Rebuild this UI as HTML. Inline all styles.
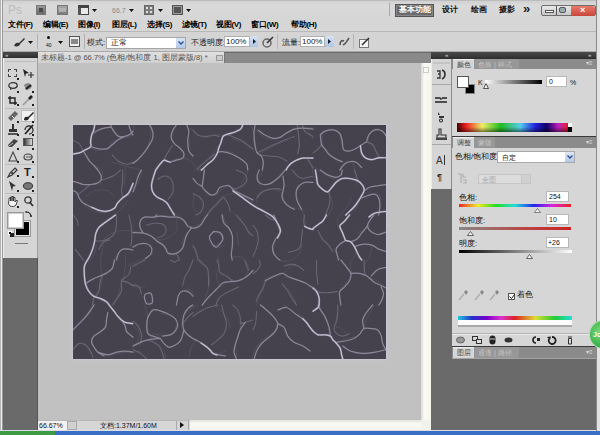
<!DOCTYPE html>
<html><head><meta charset="utf-8">
<style>
*{margin:0;padding:0;box-sizing:border-box}
html,body{width:600px;height:435px;overflow:hidden;background:#d3d3d3;font-family:"Liberation Sans",sans-serif;font-size:9px;color:#1a1a1a}
.a{position:absolute}
.t{position:absolute;white-space:nowrap;line-height:1}
.m{font-size:8px;top:21px;color:#000;letter-spacing:-0.3px;font-weight:bold}
.tb{position:absolute;width:9px;height:9px}
.dot{position:absolute;width:2px;height:2px;background:#222}
svg{position:absolute;overflow:visible}
</style></head><body>
<!-- ===== TITLE BAR ===== -->
<div class="a" style="left:0;top:0;width:600px;height:18px;background:linear-gradient(#cfcfcf,#dadada 30%,#d6d6d6)"></div>
<div class="a" style="left:0;top:0;width:600px;height:1px;background:#bdbdbd"></div>
<div class="t" style="left:8px;top:4px;font-size:12px;color:#bcbcbc;letter-spacing:0px">Ps</div>
<!-- Br -->
<div class="a" style="left:36px;top:5px;width:10px;height:10px;background:linear-gradient(#9a9a9a,#6a6a6a);border:1px solid #777"></div>
<div class="a" style="left:39px;top:8px;width:4px;height:4px;background:#4a4a4a"></div>
<!-- Mb -->
<div class="a" style="left:57px;top:5px;width:11px;height:10px;background:linear-gradient(#a8a8a8,#7a7a7a);border:1px solid #777"></div>
<div class="a" style="left:59px;top:8px;width:7px;height:4px;background:#c8c8c8;opacity:.6"></div>
<!-- view extras -->
<div class="a" style="left:78px;top:5px;width:11px;height:10px;background:#e8e8e8;border:1px solid #444;border-top-width:3px"></div>
<div class="a" style="left:78px;top:8px;width:3px;height:7px;background:#555"></div>
<svg style="left:92px;top:9px" width="5" height="3"><path d="M0 0H5L2.5 3Z" fill="#111"/></svg>
<div class="t" style="left:112px;top:7px;font-size:7px;color:#8a8a8a">66.7</div>
<svg style="left:129px;top:9px" width="5" height="3"><path d="M0 0H5L2.5 3Z" fill="#111"/></svg>
<!-- arrange -->
<div class="a" style="left:144px;top:5px;width:10px;height:10px;background:#7c7c7c;border:1px solid #666"></div>
<div class="a" style="left:146px;top:7px;width:2px;height:2px;background:#ddd"></div>
<div class="a" style="left:150px;top:7px;width:2px;height:2px;background:#ddd"></div>
<div class="a" style="left:146px;top:11px;width:2px;height:2px;background:#ddd"></div>
<div class="a" style="left:150px;top:11px;width:2px;height:2px;background:#ddd"></div>
<svg style="left:158px;top:9px" width="5" height="3"><path d="M0 0H5L2.5 3Z" fill="#111"/></svg>
<!-- screen mode -->
<div class="a" style="left:172px;top:5px;width:11px;height:10px;border:1px solid #555;background:#9a9a9a"></div>
<div class="a" style="left:174px;top:7px;width:7px;height:6px;background:#555"></div>
<svg style="left:186px;top:9px" width="5" height="3"><path d="M0 0H5L2.5 3Z" fill="#111"/></svg>
<!-- workspace -->
<div class="a" style="left:389px;top:3px;width:1px;height:13px;background:#aaa"></div>
<div class="a" style="left:395px;top:4px;width:39px;height:13px;background:#6b6b6b;border:1px solid #555;box-shadow:inset 0 0 0 1px #888"></div>
<div class="t" style="left:399px;top:6px;font-size:8px;color:#fff;font-weight:bold">基本功能</div>
<div class="t" style="left:442px;top:6px;font-size:8px;color:#111;font-weight:bold">设计</div>
<div class="t" style="left:471px;top:6px;font-size:8px;color:#111;font-weight:bold">绘画</div>
<div class="t" style="left:499px;top:6px;font-size:8px;color:#111;font-weight:bold">摄影</div>
<div class="t" style="left:523px;top:2px;font-size:13px;color:#222;font-weight:bold">»</div>
<!-- window buttons -->
<div class="a" style="left:541px;top:5px;width:55px;height:11px;border:1px solid #6e6e6e;border-radius:2px;background:linear-gradient(#e8e8e8,#c8c8c8)"></div>
<div class="a" style="left:556px;top:6px;width:1px;height:9px;background:#555"></div>
<div class="a" style="left:545px;top:10px;width:7px;height:2px;background:#fff;border:1px solid #555;box-sizing:content-box;height:1px"></div>
<div class="a" style="left:559px;top:7px;width:7px;height:6px;border:1px solid #556;border-radius:2px;background:#9aa"></div>
<div class="a" style="left:571px;top:6px;width:24px;height:10px;background:linear-gradient(#e87a6a,#c9453a);border-radius:0 2px 2px 0"></div>
<div class="t" style="left:580px;top:6px;font-size:9px;color:#fff;font-weight:bold">×</div>

<!-- ===== MENU BAR ===== -->
<div class="a" style="left:0;top:18px;width:600px;height:13px;background:#d6d6d6"></div>
<div class="t m" style="left:8px">文件(F)</div>
<div class="t m" style="left:43px">编辑(E)</div>
<div class="t m" style="left:78px">图像(I)</div>
<div class="t m" style="left:112px">图层(L)</div>
<div class="t m" style="left:147px">选择(S)</div>
<div class="t m" style="left:182px">滤镜(T)</div>
<div class="t m" style="left:216px">视图(V)</div>
<div class="t m" style="left:251px">窗口(W)</div>
<div class="t m" style="left:291px">帮助(H)</div>

<!-- ===== OPTIONS BAR ===== -->
<div class="a" style="left:2px;top:31px;width:595px;height:21px;background:#d4d4d4;border-top:1px solid #b8b8b8;border-left:1px solid #a8a8a8;border-bottom:1px solid #a9a9a9"></div>
<div class="a" style="left:37px;top:34px;width:1px;height:15px;background:#b0b0b0"></div>
<div class="a" style="left:84px;top:34px;width:1px;height:15px;background:#b0b0b0"></div>
<div class="a" style="left:277px;top:34px;width:1px;height:15px;background:#b8b8b8"></div>
<div class="a" style="left:353px;top:34px;width:1px;height:15px;background:#b8b8b8"></div>
<svg style="left:13px;top:37px" width="12" height="10"><path d="M1 9C2 6 4 5 6 6L11 1L12 2L7 7C7 9 4 10 1 9Z" fill="#333"/></svg>
<svg style="left:28px;top:41px" width="5" height="3"><path d="M0 0H5L2.5 3Z" fill="#111"/></svg>
<div class="a" style="left:47px;top:36px;width:3px;height:3px;border-radius:50%;background:#111"></div>
<div class="t" style="left:46px;top:43px;font-size:5px;color:#111">40</div>
<svg style="left:58px;top:41px" width="5" height="3"><path d="M0 0H5L2.5 3Z" fill="#111"/></svg>
<div class="a" style="left:69px;top:36px;width:11px;height:11px;border:1px solid #555;background:#eee"></div>
<div class="a" style="left:71px;top:39px;width:7px;height:5px;background:#888"></div>
<div class="t" style="left:87px;top:39px;font-size:8px">模式:</div>
<div class="a" style="left:106px;top:37px;width:80px;height:12px;background:#fff;border:1px solid #a5a5a5"></div>
<div class="t" style="left:111px;top:39px;font-size:8px">正常</div>
<div class="a" style="left:176px;top:38px;width:9px;height:10px;background:linear-gradient(#d8e4f4,#b4c8e6)"></div>
<svg style="left:178px;top:41px" width="6" height="4"><path d="M0.5 0.5L3 3L5.5 0.5" stroke="#2a4f9a" stroke-width="1.3" fill="none"/></svg>
<div class="t" style="left:191px;top:39px;font-size:8px">不透明度:</div>
<div class="a" style="left:224px;top:36px;width:26px;height:11px;background:#fff;border:1px solid #b0b0b0"></div>
<div class="t" style="left:226px;top:38px;font-size:8px">100%</div>
<div class="a" style="left:250px;top:36px;width:8px;height:11px;background:linear-gradient(#d6e2f4,#b0c4e4)"></div>
<svg style="left:253px;top:39px" width="3" height="5"><path d="M0 0L3 2.5L0 5Z" fill="#123"/></svg>
<svg style="left:262px;top:36px" width="12" height="12"><circle cx="5" cy="7" r="4" fill="none" stroke="#666" stroke-width="1.5"/><path d="M5 7L11 1" stroke="#333" stroke-width="1.6"/></svg>
<div class="t" style="left:282px;top:39px;font-size:8px">流量:</div>
<div class="a" style="left:300px;top:36px;width:25px;height:11px;background:#fff;border:1px solid #b0b0b0"></div>
<div class="t" style="left:302px;top:38px;font-size:8px">100%</div>
<div class="a" style="left:325px;top:36px;width:9px;height:11px;background:linear-gradient(#d6e2f4,#b0c4e4)"></div>
<svg style="left:328px;top:39px" width="3" height="5"><path d="M0 0L3 2.5L0 5Z" fill="#123"/></svg>
<svg style="left:339px;top:37px" width="11" height="10"><path d="M1 8C1 4 3 3 5 4M4 8C6 7 7 6 8 4L10 1" stroke="#555" stroke-width="1.6" fill="none"/></svg>
<svg style="left:359px;top:37px" width="12" height="12"><rect x="0.5" y="2.5" width="9" height="8" fill="#f4f4f4" stroke="#777"/><path d="M3 8L10 1" stroke="#333" stroke-width="1.6"/></svg>

<!-- ===== TOOLBOX ===== -->
<div class="a" style="left:0;top:0;width:3px;height:431px;background:#f0f0f0;border-left:1px solid #b4b4b4;border-right:1px solid #9a9a9a"></div>
<div class="a" style="left:3px;top:52px;width:35px;height:206px;background:#d5d5d5;border-left:1px solid #eee;border-right:1px solid #a0a0a0"></div>
<div class="a" style="left:3px;top:52px;width:35px;height:6px;background:linear-gradient(#4a4a4a,#2e2e2e)"></div>
<div class="t" style="left:5px;top:52px;font-size:6px;color:#ddd">»</div>
<div class="a" style="left:5px;top:61px;width:31px;height:1px;background:#bcbcbc"></div>
<!-- row1 marquee / move -->
<div class="a" style="left:8px;top:69px;width:9px;height:8px;border:1px dashed #444"></div>
<svg style="left:23px;top:69px" width="11" height="9"><path d="M0 0L6 4L3 4.5L2 8Z" fill="#222"/><path d="M8 3V9M5 6H11" stroke="#333" stroke-width="1.2"/></svg>
<!-- row2 lasso / quick select -->
<svg style="left:8px;top:82px" width="10" height="8"><ellipse cx="5" cy="3.5" rx="4.2" ry="2.8" fill="none" stroke="#333" stroke-width="1.3"/><path d="M2 5L3 8" stroke="#333"/></svg>
<svg style="left:23px;top:82px" width="10" height="9"><path d="M1 3C3 1 6 1 6 1L9 4C8 7 5 8 3 8Z" fill="#888"/><path d="M3 7L8 3" stroke="#222" stroke-width="2"/></svg>
<!-- row3 crop / eyedropper -->
<svg style="left:8px;top:96px" width="9" height="9"><path d="M2 0V7H9M0 2H7V9" stroke="#222" stroke-width="1.4" fill="none"/></svg>
<svg style="left:23px;top:95px" width="10" height="10"><path d="M0 10L6 4" stroke="#999" stroke-width="1.6"/><path d="M5 3L8 0L10 2L7 5Z" fill="#222"/></svg>
<div class="dot" style="left:17px;top:78px"></div>
<div class="dot" style="left:17px;top:91px"></div><div class="dot" style="left:32px;top:91px"></div>
<div class="dot" style="left:17px;top:104px"></div><div class="dot" style="left:32px;top:104px"></div>
<div class="a" style="left:5px;top:108px;width:31px;height:1px;background:#bcbcbc"></div>
<!-- row4 healing / brush(selected) -->
<svg style="left:8px;top:111px" width="11" height="10"><path d="M2 9L0 7L7 0L10 3L3 10Z" fill="#666"/><path d="M4 5L6 7" stroke="#ddd"/></svg>
<div class="a" style="left:21px;top:110px;width:14px;height:12px;background:#f0f0f0;border:1px solid #bbb"></div>
<svg style="left:23px;top:112px" width="11" height="9"><path d="M1 8C1 5 3 4 5 5L10 0L11 1L6 6C6 8 3 9 1 8Z" fill="#222"/></svg>
<!-- row5 stamp / history brush -->
<svg style="left:8px;top:124px" width="10" height="11"><path d="M4 0H6V5H9V8H1V5H4Z" fill="#333"/><rect x="0" y="9" width="10" height="2" fill="#555"/></svg>
<svg style="left:23px;top:124px" width="11" height="11"><path d="M2 6A4 4 0 1 1 6 10" stroke="#333" stroke-width="1.3" fill="none"/><path d="M2 10L10 1" stroke="#222" stroke-width="1.8"/></svg>
<!-- row6 eraser / gradient -->
<svg style="left:8px;top:138px" width="11" height="9"><path d="M0 7L6 1L10 3L4 9H1Z" fill="#444"/><path d="M1 8L5 5" stroke="#bbb"/></svg>
<div class="a" style="left:23px;top:138px;width:10px;height:8px;background:linear-gradient(90deg,#333,#ddd);border:1px solid #555"></div>
<!-- row7 blur / dodge -->
<svg style="left:9px;top:152px" width="8" height="10"><path d="M4 0L8 9H0Z" fill="none" stroke="#444" stroke-width="1.1"/></svg>
<svg style="left:23px;top:152px" width="11" height="10"><ellipse cx="5" cy="5" rx="4" ry="3" fill="none" stroke="#444" stroke-width="1.2"/><path d="M3 5H10" stroke="#555"/></svg>
<div class="dot" style="left:17px;top:121px"></div><div class="dot" style="left:32px;top:121px"></div>
<div class="dot" style="left:17px;top:134px"></div><div class="dot" style="left:32px;top:134px"></div>
<div class="dot" style="left:17px;top:148px"></div><div class="dot" style="left:32px;top:148px"></div>
<div class="dot" style="left:17px;top:161px"></div><div class="dot" style="left:32px;top:161px"></div>
<div class="a" style="left:5px;top:164px;width:31px;height:1px;background:#bcbcbc"></div>
<!-- row8 pen / type -->
<svg style="left:8px;top:167px" width="10" height="10"><path d="M0 10L2 6L7 1L9 3L4 8Z" fill="none" stroke="#333" stroke-width="1.2"/><circle cx="4" cy="6" r="1" fill="#333"/></svg>
<div class="t" style="left:24px;top:167px;font-size:11px;font-weight:bold;color:#222">T</div>
<!-- row9 path select / ellipse -->
<svg style="left:9px;top:181px" width="8" height="10"><path d="M0 0L7 5L4 5.5L3 10Z" fill="#333"/></svg>
<svg style="left:23px;top:182px" width="10" height="8"><ellipse cx="5" cy="4" rx="4.5" ry="3.3" fill="#777" stroke="#333"/></svg>
<div class="dot" style="left:17px;top:175px"></div><div class="dot" style="left:32px;top:176px"></div>
<div class="dot" style="left:17px;top:190px"></div><div class="dot" style="left:32px;top:190px"></div>
<div class="a" style="left:5px;top:193px;width:31px;height:1px;background:#bcbcbc"></div>
<!-- row10 hand / zoom -->
<svg style="left:8px;top:196px" width="10" height="11"><path d="M2 10C0 8 0 6 1 5V2H2.5V5V1H4V5V0.5H5.5V5V1.5H7V6L8 4.5H9.5L8 9C7 10.5 4 11 2 10Z" fill="#f4f4f4" stroke="#333" stroke-width="0.9"/></svg>
<svg style="left:24px;top:196px" width="10" height="11"><circle cx="4" cy="4" r="3.2" fill="none" stroke="#333" stroke-width="1.3"/><path d="M6 6.5L9 10" stroke="#333" stroke-width="1.8"/></svg>
<div class="dot" style="left:17px;top:206px"></div>
<!-- colors -->
<div class="a" style="left:15px;top:221px;width:15px;height:15px;background:#000;border:1px solid #e6e6e6;box-shadow:0 0 0 1px #999"></div>
<div class="a" style="left:8px;top:213px;width:15px;height:15px;background:#fff;border:1px solid #ccc;box-shadow:0 0 0 1px #999"></div>
<svg style="left:26px;top:211px" width="6" height="6"><path d="M0 1C3 1 5 2 5 6" stroke="#222" fill="none" stroke-width="1.2"/><path d="M0 0V2M4 5H6" stroke="#222"/></svg>
<div class="a" style="left:8px;top:231px;width:4px;height:4px;background:#000;border:1px solid #fff"></div>
<div class="a" style="left:10px;top:233px;width:4px;height:4px;background:#222"></div>
<div class="a" style="left:15px;top:243px;width:13px;height:1px;background:#777"></div>
<div class="a" style="left:3px;top:258px;width:35px;height:172px;background:#6a6a6a;border-right:1px solid #555"></div>

<!-- ===== DOC TAB BAR ===== -->
<div class="a" style="left:38px;top:52px;width:393px;height:11px;background:#8a8a8a;border-top:1px solid #6a6a6a"></div>
<div class="a" style="left:38px;top:52px;width:187px;height:11px;background:linear-gradient(#e0e0e0,#d0d0d0);border-right:1px solid #777"></div>
<div class="t" style="left:41px;top:54px;font-size:7.5px;color:#555">未标题-1 @ 66.7% (色相/饱和度 1, 图层蒙版/8) *</div>
<div class="a" style="left:216px;top:55px;width:7px;height:6px;border:1px solid #999;background:#ccc"></div>

<!-- ===== CANVAS AREA ===== -->
<div class="a" style="left:38px;top:63px;width:383px;height:357px;background:#c1c1c1"></div>
<div class="a" id="cv" style="left:73px;top:125px;width:313px;height:234px;background:#45414d;overflow:hidden;box-shadow:0 0 0 1px #c8c7cf,0 0 2px 3px #c4c4c8"><svg width="313" height="234" viewBox="0 0 313 234" style="position:absolute;left:0;top:0"><path fill="none" stroke="#55505e" stroke-width="1" stroke-linecap="round" d="M21.4 0.0C20.9 1.4 19.2 5.3 18.6 8.3C18.0 11.3 18.4 15.6 18.0 18.0C17.6 20.4 18.1 21.3 16.5 22.8C14.9 24.3 11.1 26.1 8.3 27.0C5.6 27.9 1.4 28.1 0.0 28.3M20.7 9.7C21.9 8.9 24.9 6.1 27.6 4.8C30.3 3.5 34.9 2.1 37.0 2.0C39.1 1.9 38.6 2.6 40.0 4.0C41.4 5.4 43.5 8.9 45.5 10.3C47.5 11.7 49.9 12.4 52.0 12.4C54.1 12.4 56.5 11.7 58.0 10.3C59.5 8.9 60.2 5.7 60.7 4.0C61.2 2.3 60.7 0.7 60.7 0.0M16.5 22.8C17.8 23.2 21.2 25.4 24.0 25.5C26.8 25.6 30.3 24.9 33.0 23.4C35.7 21.9 37.5 18.1 40.0 16.5C42.5 14.9 45.0 14.8 48.0 13.8C51.0 12.8 56.3 10.9 58.0 10.3M10.3 26.2C11.1 27.6 13.5 32.2 15.2 34.5C16.9 36.8 18.6 38.4 20.7 40.0C22.8 41.6 26.1 42.6 27.6 44.0C29.1 45.4 29.6 46.5 29.7 48.3C29.8 50.1 28.6 53.0 28.3 55.0C28.0 57.0 27.7 59.2 27.6 60.0M78.6 0.0C78.3 2.3 77.9 9.7 77.0 13.8C76.1 17.9 74.6 21.8 73.0 24.8C71.4 27.8 69.6 29.6 67.6 31.7C65.5 33.8 62.8 36.1 60.7 37.2C58.6 38.4 56.0 38.4 55.0 38.6M52.4 41.4C54.5 41.8 62.0 43.0 64.8 44.0C67.6 45.0 68.8 45.8 69.0 47.6C69.2 49.4 66.9 52.9 66.2 55.0C65.5 57.1 65.0 59.2 64.8 60.0M38.6 37.2C40.2 37.7 46.0 38.9 48.3 40.0C50.6 41.1 51.9 40.7 52.4 44.0C52.9 47.3 51.2 57.3 51.0 60.0M113.0 0.0C113.2 0.5 113.3 1.9 114.5 2.8C115.7 3.7 117.9 4.1 120.0 5.5C122.1 6.9 124.5 9.8 127.0 11.0C129.5 12.2 132.7 12.6 135.0 12.4C137.3 12.2 138.9 10.1 140.7 9.7C142.5 9.2 144.2 9.5 146.0 9.7C147.8 9.9 149.4 11.5 151.7 11.0C154.0 10.5 158.6 7.6 160.0 6.9M100.7 4.0C100.5 5.6 98.8 11.0 99.3 13.8C99.8 16.6 101.8 18.9 103.4 20.7C105.0 22.5 107.6 23.0 109.0 24.8C110.4 26.6 110.3 29.9 111.7 31.7C113.1 33.5 115.4 34.3 117.2 35.9C119.0 37.5 121.2 39.5 122.8 41.4C124.4 43.2 126.3 46.1 127.0 47.0M117.2 16.5C117.0 17.9 115.4 22.3 115.9 24.8C116.4 27.3 119.3 30.6 120.0 31.7M160.0 27.6C158.6 27.4 154.2 26.2 151.7 26.2C149.2 26.2 146.4 26.5 144.8 27.6C143.2 28.7 143.6 31.2 142.0 33.0C140.4 34.8 136.8 36.8 135.0 38.6C133.2 40.4 131.7 41.7 131.0 44.0C130.3 46.3 131.2 49.7 131.0 52.4C130.8 55.1 129.9 58.7 129.7 60.0M146.0 19.3C145.1 20.7 143.0 24.8 140.7 27.6C138.4 30.4 135.2 33.4 132.4 35.9C129.6 38.4 126.1 40.9 124.0 42.8C121.9 44.6 120.7 46.3 120.0 47.0M80.0 49.7C80.7 48.3 82.4 43.7 84.0 41.4C85.6 39.1 88.1 37.0 89.7 35.9C91.3 34.8 92.9 34.3 93.8 34.5C94.7 34.7 95.0 36.8 95.2 37.2M95.2 37.2C97.3 36.5 104.4 33.5 107.6 33.0C110.8 32.5 113.3 34.2 114.5 34.5M160.0 6.9C161.2 6.7 165.1 6.7 166.9 5.5C168.7 4.3 170.3 0.9 171.0 0.0M178.0 0.0C178.4 1.4 180.2 5.3 180.7 8.3C181.1 11.3 180.2 15.0 180.7 18.0C181.1 21.0 182.2 24.1 183.4 26.2C184.6 28.2 186.4 28.2 187.6 30.3C188.8 32.4 190.1 35.8 190.3 38.6C190.5 41.4 189.9 44.3 189.0 47.0C188.1 49.7 185.0 52.8 184.8 55.0C184.6 57.2 187.1 59.2 187.6 60.0M183.4 5.5C184.8 6.7 188.7 10.9 191.7 12.4C194.7 13.9 198.4 14.7 201.4 14.5C204.4 14.3 207.2 12.5 209.7 11.0C212.2 9.5 214.3 6.9 216.6 5.5C218.9 4.1 219.5 3.2 223.4 2.8C227.3 2.3 237.2 2.8 240.0 2.8M160.0 13.8C161.8 14.5 168.0 16.4 171.0 18.0C174.0 19.6 175.9 22.0 178.0 23.4C180.1 24.8 182.5 25.7 183.4 26.2M186.2 29.0C187.8 28.1 192.4 25.2 195.9 23.4C199.4 21.6 203.8 19.4 207.0 18.0C210.2 16.6 213.7 15.7 215.0 15.2M240.0 33.0C238.2 33.0 232.2 32.5 229.0 33.0C225.8 33.5 223.0 34.5 220.7 35.9C218.4 37.3 217.0 39.5 215.2 41.4C213.4 43.2 211.6 45.2 209.7 47.0C207.8 48.8 206.1 50.2 204.0 52.4C201.9 54.6 198.3 58.7 197.2 60.0M160.0 29.0C161.4 29.9 166.0 32.7 168.3 34.5C170.6 36.3 172.9 37.5 173.8 40.0C174.7 42.5 174.7 46.7 173.8 49.7C172.9 52.7 169.2 56.6 168.3 58.0M223.4 0.0C223.8 2.3 225.8 9.2 226.0 13.8C226.2 18.4 225.0 25.3 224.8 27.6M231.7 2.8C232.6 3.7 235.6 6.5 237.0 8.3C238.4 10.1 239.5 12.9 240.0 13.8M234.5 34.5C235.2 35.6 237.7 39.1 238.6 41.4C239.5 43.7 239.8 47.1 240.0 48.3M249.7 6.9C251.1 6.4 255.2 3.8 258.0 4.0C260.8 4.2 264.4 5.5 266.2 8.3C268.0 11.1 267.9 17.7 269.0 20.7C270.1 23.7 270.9 25.5 273.0 26.2C275.1 26.9 279.1 25.7 281.4 24.8C283.7 23.9 286.1 21.4 287.0 20.7M249.7 8.3C249.7 10.1 249.0 16.6 249.7 19.3C250.4 22.1 252.4 23.0 253.8 24.8C255.2 26.6 255.7 28.2 258.0 30.3C260.3 32.4 265.1 36.1 267.6 37.2C270.1 38.4 270.7 37.2 273.0 37.2C275.3 37.2 279.1 36.7 281.4 37.2C283.7 37.7 286.1 39.5 287.0 40.0M240.0 27.6C240.9 26.9 243.9 24.8 245.5 23.4C247.1 22.0 249.0 20.0 249.7 19.3M287.0 20.7C287.2 22.3 287.0 28.0 288.3 30.3C289.6 32.6 292.7 33.8 295.0 34.5C297.3 35.2 300.4 34.8 302.0 34.5C303.6 34.2 303.0 33.2 304.8 33.0C306.6 32.8 311.6 33.0 313.0 33.0M295.0 16.5C295.3 15.1 295.4 10.4 296.6 8.3C297.8 6.2 299.9 4.5 302.0 4.0C304.1 3.5 307.2 4.3 309.0 5.5C310.8 6.7 312.3 10.1 313.0 11.0M300.7 19.3C301.1 20.7 302.5 25.8 303.4 27.6C304.3 29.4 305.7 29.9 306.2 30.3M267.6 41.4C267.8 42.8 269.5 47.9 269.0 49.7C268.5 51.5 266.2 51.7 264.8 52.4C263.4 53.1 261.4 53.6 260.7 53.8M280.0 38.6C280.5 40.2 282.1 44.7 282.8 48.3C283.5 51.9 283.8 58.0 284.0 60.0M240.0 41.4C241.4 42.3 245.6 45.2 248.3 47.0C251.1 48.8 254.0 51.3 256.5 52.4C259.0 53.5 262.2 53.6 263.4 53.8M240.0 48.3C240.5 49.4 242.1 53.0 242.8 55.0C243.5 57.0 243.8 59.2 244.0 60.0M63.4 60.0C62.7 61.4 61.1 66.2 59.3 68.3C57.5 70.4 54.7 71.0 52.4 72.4C50.1 73.8 47.1 74.9 45.5 76.5C43.9 78.1 44.2 80.4 42.8 82.0C41.4 83.6 39.7 85.3 37.2 86.2C34.7 87.1 30.8 87.8 27.6 87.6C24.4 87.4 20.8 86.2 18.0 84.8C15.2 83.4 13.1 81.4 11.0 79.3C8.9 77.2 6.9 74.2 5.5 72.4C4.1 70.6 3.2 69.0 2.8 68.3M55.2 75.2C54.1 76.6 50.6 80.9 48.3 83.4C46.0 85.9 44.4 88.0 41.4 90.3C38.4 92.6 33.1 94.9 30.3 97.2C27.5 99.5 26.2 101.5 24.8 104.0C23.4 106.5 22.7 109.7 22.0 112.4C21.3 115.1 20.9 118.7 20.7 120.0M13.8 71.0C15.2 70.1 18.6 66.4 22.0 65.5C25.4 64.6 31.3 64.6 34.5 65.5C37.7 66.4 40.2 70.1 41.4 71.0M80.0 93.0C78.4 93.0 72.6 92.1 70.3 93.0C68.0 93.9 66.7 96.5 66.2 98.6C65.8 100.7 66.2 103.7 67.6 105.5C69.0 107.3 72.4 108.5 74.5 109.7C76.6 110.9 79.1 112.0 80.0 112.4M66.2 107.0C63.9 106.8 56.5 105.5 52.4 105.5C48.3 105.5 44.6 105.8 41.4 107.0C38.2 108.2 35.3 110.2 33.0 112.4C30.7 114.6 28.5 118.7 27.6 120.0M80.0 68.3C81.4 69.2 86.0 72.2 88.3 73.8C90.6 75.4 92.0 75.9 93.8 78.0C95.6 80.1 97.0 83.9 99.3 86.2C101.6 88.5 105.1 89.6 107.6 91.7C110.1 93.8 112.7 96.8 114.5 98.6C116.3 100.4 117.9 102.1 118.6 102.8M118.6 102.8C120.0 102.1 124.7 100.4 127.0 98.6C129.3 96.8 130.6 94.2 132.4 91.7C134.2 89.2 135.9 85.9 138.0 83.4C140.1 80.9 142.5 78.6 144.8 76.5C147.1 74.4 149.2 72.4 151.7 71.0C154.2 69.6 158.6 68.8 160.0 68.3M118.6 102.8C117.7 104.0 114.4 107.7 113.0 109.7C111.6 111.7 111.0 113.3 110.3 115.0C109.6 116.7 109.2 119.2 109.0 120.0M129.7 60.0C129.7 60.7 128.8 62.6 129.7 64.0C130.6 65.4 133.1 67.3 135.2 68.3C137.2 69.2 139.9 70.2 142.0 69.7C144.1 69.2 145.5 66.9 147.6 65.5C149.7 64.1 152.4 61.9 154.5 61.4C156.6 60.9 159.1 62.6 160.0 62.8M80.0 93.0C81.4 92.5 85.3 90.5 88.3 90.3C91.3 90.1 95.5 91.0 98.0 91.7C100.5 92.4 102.5 92.2 103.4 94.5C104.3 96.8 104.3 102.8 103.4 105.5C102.5 108.2 100.5 109.4 98.0 111.0C95.5 112.6 91.3 114.8 88.3 115.0C85.3 115.2 81.4 112.8 80.0 112.4M121.4 68.3C121.2 70.4 119.6 77.5 120.0 80.7C120.4 83.9 123.3 86.4 124.0 87.6M139.3 108.3C140.0 108.1 141.8 106.5 143.4 106.9C145.0 107.4 148.3 109.2 149.0 111.0C149.7 112.8 148.8 116.5 147.6 118.0C146.4 119.5 142.9 119.7 142.0 120.0M149.0 87.6C149.9 89.9 152.7 97.3 154.5 101.4C156.3 105.5 159.1 110.6 160.0 112.4M160.0 62.8C161.2 63.7 164.2 66.2 166.9 68.3C169.7 70.4 173.5 72.9 176.5 75.2C179.5 77.5 181.8 79.9 184.8 82.0C187.8 84.1 191.7 85.8 194.5 87.6C197.3 89.4 199.8 90.9 201.4 93.0C203.0 95.1 203.1 97.7 204.0 100.0C204.9 102.3 207.2 104.7 207.0 107.0C206.8 109.3 203.7 111.6 202.8 113.8C201.9 116.0 201.6 119.0 201.4 120.0M183.4 78.0C183.6 76.6 183.7 71.8 184.8 69.7C186.0 67.6 187.5 66.5 190.3 65.5C193.1 64.5 198.4 63.5 201.4 64.0C204.4 64.5 207.2 67.6 208.3 68.3M212.4 60.0C211.9 61.6 209.7 67.0 209.7 69.7C209.7 72.5 211.0 74.5 212.4 76.5C213.8 78.5 215.9 80.8 218.0 82.0C220.1 83.2 222.5 82.7 224.8 83.4C227.1 84.1 230.5 85.7 231.7 86.2M224.8 60.0C224.6 61.8 222.9 67.5 223.4 71.0C223.9 74.5 226.2 76.8 227.6 80.7C229.0 84.6 230.8 91.0 231.7 94.5C232.6 98.0 231.6 99.8 233.0 101.4C234.4 103.0 238.8 103.6 240.0 104.0M160.0 87.6C161.2 88.8 164.8 92.2 166.9 94.5C169.0 96.8 170.6 98.9 172.4 101.4C174.2 103.9 177.1 108.3 178.0 109.7M164.0 107.0L165.5 120.0M244.0 60.0C244.9 60.7 248.1 63.0 249.7 64.0C251.3 65.0 252.4 66.4 253.8 66.2C255.2 66.0 256.9 63.8 258.0 62.8C259.1 61.8 260.2 60.5 260.7 60.0M291.0 60.0C290.8 61.4 290.6 65.3 289.7 68.3C288.8 71.3 286.9 75.0 285.5 78.0C284.1 81.0 283.2 83.9 281.4 86.2C279.6 88.5 276.6 89.6 274.5 91.7C272.4 93.8 270.4 97.0 269.0 98.6C267.6 100.2 266.2 100.0 266.2 101.4C266.2 102.8 268.1 104.9 269.0 107.0C269.9 109.1 270.1 112.0 271.7 113.8C273.3 115.6 277.0 117.0 278.6 118.0C280.2 119.0 280.9 119.7 281.4 120.0M240.0 104.0C241.4 102.9 245.8 99.5 248.3 97.2C250.8 94.9 253.4 92.8 255.2 90.3C257.0 87.8 258.6 84.3 259.3 82.0C260.0 79.7 259.8 78.5 259.3 76.5C258.8 74.5 257.0 70.8 256.5 69.7M313.0 87.6C311.6 87.6 307.1 86.9 304.8 87.6C302.5 88.3 300.9 89.9 299.3 91.7C297.7 93.5 296.4 96.5 295.2 98.6C294.0 100.6 294.3 102.4 292.4 104.0C290.5 105.6 285.4 107.6 284.0 108.3M292.4 73.8C293.5 73.1 297.2 70.6 299.3 69.7C301.4 68.8 303.4 67.6 304.8 68.3C306.2 69.0 307.4 70.8 307.6 73.8C307.8 76.8 306.4 84.1 306.2 86.2M278.6 73.8C277.5 75.6 274.0 81.6 271.7 84.8C269.4 88.0 265.9 90.2 264.8 93.0C263.7 95.8 264.8 100.0 264.8 101.4M2.8 125.5C3.7 126.7 6.7 130.3 8.3 132.4C9.9 134.5 12.0 135.9 12.4 138.0C12.8 140.1 11.0 141.8 11.0 144.8C11.0 147.8 11.7 152.7 12.4 155.9C13.1 159.1 13.8 161.5 15.2 164.0C16.6 166.5 18.6 169.2 20.7 171.0C22.8 172.8 25.1 173.5 27.6 175.0C30.1 176.5 34.5 179.2 35.9 180.0M12.4 138.0C13.8 136.8 18.9 134.0 20.7 131.0C22.5 128.0 22.9 121.8 23.4 120.0M13.8 157.2C16.1 156.0 23.5 152.6 27.6 150.3C31.7 148.0 36.1 146.4 38.6 143.4C41.1 140.4 41.2 135.4 42.8 132.4C44.4 129.4 46.2 126.9 48.3 125.5C50.4 124.1 54.1 124.2 55.2 124.0M30.3 120.0C29.9 122.8 27.8 131.0 27.6 136.5C27.4 142.0 29.2 148.2 29.0 153.0C28.8 157.8 27.6 162.3 26.2 165.5C24.8 168.7 21.6 170.0 20.7 172.4C19.8 174.8 20.7 178.7 20.7 180.0M55.2 140.7C56.8 140.0 61.6 137.9 64.8 136.5C68.0 135.1 72.0 133.8 74.5 132.4C77.0 131.0 79.1 129.0 80.0 128.3M47.0 154.5C48.4 155.2 52.2 157.2 55.2 158.6C58.2 160.0 62.0 162.3 64.8 162.8C67.5 163.3 70.5 161.6 71.7 161.4M52.4 128.3C52.4 130.4 52.8 136.3 52.4 140.7C52.0 145.1 50.9 149.9 49.7 154.5C48.6 159.1 46.9 164.1 45.5 168.3C44.1 172.6 42.1 178.1 41.4 180.0M71.7 169.7C72.6 169.5 76.1 167.4 77.2 168.3C78.3 169.2 79.0 173.4 78.6 175.0C78.1 176.6 75.2 177.5 74.5 178.0M91.0 120.0C91.2 120.9 91.2 124.1 92.4 125.5C93.6 126.9 95.7 128.1 98.0 128.3C100.3 128.5 104.2 128.3 106.2 126.9C108.2 125.5 109.6 121.2 110.3 120.0M120.0 120.0C120.5 121.4 121.6 125.3 122.8 128.3C124.0 131.3 125.2 135.5 127.0 138.0C128.8 140.5 132.2 140.7 133.8 143.4C135.4 146.2 136.4 151.1 136.6 154.5C136.8 157.9 135.9 161.0 135.2 164.0C134.5 167.0 133.3 169.7 132.4 172.4C131.5 175.1 130.1 178.7 129.7 180.0M160.0 154.5C158.6 155.2 154.5 157.0 151.7 158.6C148.9 160.2 145.7 162.2 143.4 164.0C141.1 165.8 139.6 167.8 138.0 169.7C136.4 171.6 134.5 174.3 133.8 175.2M144.8 131.0C145.0 132.6 146.4 137.2 146.2 140.7C146.0 144.1 143.2 148.2 143.4 151.7C143.6 155.1 146.9 159.8 147.6 161.4M107.6 167.0C109.0 166.5 113.6 163.6 115.9 164.0C118.2 164.4 120.5 168.8 121.4 169.7M138.0 120.0C139.1 120.5 142.5 122.8 144.8 122.8C147.1 122.8 150.5 120.5 151.7 120.0M201.4 120.0C201.2 121.4 199.6 126.0 200.0 128.3C200.4 130.6 201.9 132.4 204.0 133.8C206.1 135.2 209.6 136.5 212.4 136.5C215.2 136.5 218.4 135.2 220.7 133.8C223.0 132.4 224.8 130.6 226.2 128.3C227.6 126.0 228.5 121.4 229.0 120.0M160.0 132.4C161.4 132.4 165.8 131.0 168.3 132.4C170.8 133.8 174.5 137.5 175.2 140.7C175.9 143.9 174.0 149.2 172.4 151.7C170.8 154.2 167.6 155.0 165.5 155.9C163.4 156.8 160.9 157.0 160.0 157.2M191.7 154.5C193.3 153.8 198.2 151.5 201.4 150.3C204.6 149.2 208.0 149.2 211.0 147.6C214.0 146.0 216.8 141.6 219.3 140.7C221.8 139.8 225.0 141.8 226.2 142.0M191.7 154.5C191.2 156.3 189.9 162.5 189.0 165.5C188.1 168.5 187.1 170.0 186.2 172.4C185.3 174.8 183.9 178.7 183.4 180.0M212.4 151.7C214.0 152.2 218.8 153.6 222.0 154.5C225.2 155.4 228.7 156.0 231.7 157.2C234.7 158.3 238.6 160.7 240.0 161.4M215.2 164.0C216.1 165.4 219.3 169.7 220.7 172.4C222.1 175.1 222.9 178.7 223.4 180.0M280.0 120.0C280.5 121.4 283.3 125.3 282.8 128.3C282.3 131.3 277.9 134.8 277.2 138.0C276.5 141.2 279.1 144.6 278.6 147.6C278.2 150.6 276.3 153.2 274.5 155.9C272.7 158.6 269.0 161.2 267.6 164.0C266.2 166.8 266.2 169.7 266.2 172.4C266.2 175.1 267.4 178.7 267.6 180.0M260.7 124.0C261.6 125.6 264.4 131.0 266.2 133.8C268.0 136.6 269.6 138.4 271.7 140.7C273.8 143.0 275.8 146.2 278.6 147.6C281.4 149.0 285.1 148.1 288.3 149.0C291.5 149.9 295.0 151.6 298.0 153.0C301.0 154.4 303.9 155.8 306.2 157.2C308.5 158.6 310.8 160.7 311.7 161.4M240.0 161.4C240.7 162.1 243.1 163.7 244.0 165.5C244.9 167.3 245.5 170.0 245.5 172.4C245.5 174.8 244.2 178.7 244.0 180.0M299.3 120.0C298.9 121.8 297.8 128.0 296.6 131.0C295.5 134.0 293.3 135.2 292.4 138.0C291.5 140.8 291.2 146.0 291.0 147.6M35.9 180.0C36.8 181.2 39.5 184.6 41.4 186.9C43.2 189.2 45.4 192.2 47.0 193.8C48.6 195.4 50.1 194.7 51.0 196.5C51.9 198.3 51.9 202.7 52.4 204.8C52.9 206.9 53.6 208.3 53.8 209.0M52.4 196.5C53.8 197.2 58.4 198.8 60.7 200.7C63.0 202.5 65.5 205.1 66.2 207.6C66.9 210.1 66.0 213.4 64.8 215.9C63.6 218.4 60.2 221.7 59.3 222.8M19.3 180.0C18.4 181.6 15.9 186.9 13.8 189.7C11.7 192.4 9.2 194.2 6.9 196.5C4.6 198.8 1.2 202.2 0.0 203.4M34.5 188.3C34.2 189.7 33.5 194.0 33.0 196.5C32.5 199.0 33.1 201.6 31.7 203.4C30.3 205.2 26.9 206.0 24.8 207.6C22.7 209.2 20.0 210.7 19.3 213.0C18.6 215.3 19.6 219.1 20.7 221.4C21.8 223.7 23.9 225.4 26.2 227.0C28.5 228.6 33.1 230.3 34.5 231.0M34.5 231.0C36.3 230.6 41.6 229.0 45.5 228.3C49.4 227.6 54.1 227.2 58.0 227.0C61.9 226.8 67.2 227.0 69.0 227.0M0.0 222.8C0.9 222.1 3.2 218.8 5.5 218.6C7.8 218.4 11.7 219.8 13.8 221.4C15.9 223.0 17.3 227.2 18.0 228.3M71.7 180.0C72.2 181.8 74.0 187.3 74.5 191.0C75.0 194.7 74.0 198.8 74.5 202.0C75.0 205.2 76.3 208.0 77.2 210.3C78.1 212.6 79.5 215.0 80.0 215.9M66.2 220.0C67.1 219.3 69.4 216.8 71.7 215.9C74.0 215.0 78.6 214.7 80.0 214.5M125.5 180.0C123.9 180.9 118.4 183.2 115.9 185.5C113.4 187.8 111.5 191.1 110.3 193.8C109.1 196.6 108.5 199.7 109.0 202.0C109.5 204.3 111.2 205.5 113.0 207.6C114.8 209.7 117.7 212.9 120.0 214.5C122.3 216.1 124.7 216.0 127.0 217.2C129.3 218.3 132.0 219.8 133.8 221.4C135.6 223.0 135.9 225.8 138.0 227.0C140.1 228.2 143.7 228.6 146.2 228.3C148.7 228.1 151.9 226.0 153.0 225.5M88.3 188.3C89.9 188.8 95.5 189.6 98.0 191.0C100.5 192.4 102.7 194.2 103.4 196.5C104.1 198.8 102.9 202.7 102.0 204.8C101.1 206.9 99.8 208.1 98.0 209.0C96.2 209.9 94.0 210.3 91.0 210.3C88.0 210.3 81.8 209.2 80.0 209.0M80.0 217.2C80.9 217.7 83.7 218.6 85.5 220.0C87.3 221.4 89.8 223.2 91.0 225.5C92.2 227.8 92.2 232.6 92.4 234.0M122.8 215.9C122.1 216.8 119.8 218.7 118.6 221.4C117.4 224.1 116.4 230.2 115.9 232.0M140.7 180.0C141.6 180.7 143.9 181.7 146.2 184.0C148.5 186.3 152.7 190.8 154.5 193.8C156.3 196.8 156.8 200.6 157.2 202.0M111.7 185.5C112.6 185.1 115.6 183.7 117.2 182.8C118.8 181.9 120.7 180.5 121.4 180.0M187.6 180.0C188.5 180.9 190.9 183.7 193.0 185.5C195.1 187.3 198.2 188.7 200.0 191.0C201.8 193.3 203.8 196.8 204.0 199.3C204.2 201.8 203.0 204.1 201.4 206.2C199.8 208.3 196.8 209.9 194.5 211.7C192.2 213.5 189.7 215.1 187.6 217.2C185.5 219.2 183.4 221.2 182.0 224.0C180.6 226.8 179.8 232.3 179.3 234.0M204.0 199.3C204.9 200.0 208.1 201.3 209.7 203.4C211.3 205.5 212.0 209.4 213.8 211.7C215.6 214.0 218.2 215.8 220.7 217.2C223.2 218.6 226.7 218.9 229.0 220.0C231.3 221.1 233.6 223.3 234.5 224.0M230.3 192.4C231.0 193.3 233.3 196.2 234.5 198.0C235.7 199.8 236.3 201.8 237.2 203.4C238.1 205.0 239.5 206.9 240.0 207.6M211.0 180.0C212.8 181.4 218.8 186.2 222.0 188.3C225.2 190.4 228.9 191.7 230.3 192.4M168.3 198.0C167.8 200.1 166.4 206.6 165.5 210.3C164.6 214.0 163.1 216.4 162.8 220.0C162.6 223.6 163.8 230.0 164.0 232.0M240.0 206.2C241.2 206.7 244.2 208.3 246.9 209.0C249.7 209.7 254.4 209.4 256.5 210.3C258.6 211.2 257.9 212.7 259.3 214.5C260.7 216.3 263.4 219.3 264.8 221.4C266.2 223.5 266.9 224.9 267.6 227.0C268.3 229.1 268.8 232.8 269.0 234.0M256.5 210.3C256.3 208.7 256.1 203.9 255.2 200.7C254.3 197.5 252.2 193.8 251.0 191.0C249.8 188.2 249.2 185.8 248.3 184.0C247.4 182.2 246.0 180.7 245.5 180.0M263.4 217.2C265.5 216.5 272.2 214.2 275.9 213.0C279.6 211.8 283.0 211.9 285.5 210.3C288.0 208.7 288.2 204.3 291.0 203.4C293.8 202.5 299.2 203.7 302.0 204.8C304.8 206.0 306.0 206.9 307.6 210.3C309.2 213.8 311.0 223.0 311.7 225.5M291.0 203.4C291.5 201.8 292.6 196.8 293.8 193.8C295.0 190.8 296.9 187.8 298.0 185.5C299.1 183.2 300.2 180.9 300.7 180.0M271.7 221.4C273.3 222.6 277.0 227.2 281.4 228.3C285.8 229.5 292.9 229.0 298.0 228.3C303.1 227.6 309.4 224.7 311.7 224.0M264.8 182.8C264.6 184.6 263.9 190.8 263.4 193.8C262.9 196.8 261.3 199.1 262.0 200.7C262.7 202.3 265.8 202.2 267.6 203.4C269.4 204.6 272.1 206.9 273.0 207.6"/><path fill="none" stroke="#6a6474" stroke-width="1.1" stroke-linecap="round" stroke-linejoin="round" d="M0.0 15.5C1.0 16.0 4.5 16.9 6.2 18.6C7.9 20.3 9.6 24.7 10.3 25.9M39.3 30.0C40.3 31.0 43.1 34.7 45.5 36.2C47.9 37.8 51.4 39.1 53.8 39.3C56.2 39.5 59.0 37.6 60.0 37.2M99.3 20.7C98.6 21.7 96.6 24.7 95.2 26.9C93.8 29.1 91.7 32.9 91.0 34.1M17.6 59.5C16.7 60.2 14.3 62.1 12.4 63.6C10.5 65.2 7.2 67.9 6.2 68.8M49.6 45.0C49.6 46.7 49.8 51.8 49.6 55.3C49.4 58.8 48.6 62.8 48.6 65.7C48.6 68.6 49.4 71.7 49.6 72.9M27.9 55.3C28.9 55.0 31.9 54.1 34.1 53.3C36.4 52.4 39.1 51.6 41.4 50.2C43.6 48.8 46.6 45.9 47.6 45.0M84.8 54.3C85.7 53.8 88.1 51.6 90.0 51.2C91.9 50.9 94.7 51.3 96.2 52.2C97.8 53.1 98.6 54.7 99.3 56.4C100.0 58.1 100.3 60.5 100.3 62.6C100.3 64.7 100.1 66.9 99.3 68.8C98.5 70.7 95.9 73.1 95.2 74.0M120.0 5.2C120.9 6.1 123.0 9.3 125.2 10.3C127.4 11.3 130.8 11.4 133.4 11.4C136.0 11.4 138.6 10.3 140.7 10.3C142.8 10.3 145.0 11.2 145.9 11.4M124.1 45.0C125.0 44.0 127.4 41.1 129.3 39.3C131.2 37.5 133.4 35.8 135.5 34.1C137.6 32.4 140.7 29.9 141.7 29.0M154.1 9.3C155.3 9.8 159.0 11.4 161.4 12.4C163.8 13.4 166.2 14.1 168.6 15.5C171.0 16.9 173.9 19.3 175.8 20.7C177.7 22.1 179.3 23.3 180.0 23.8M184.1 27.9C185.1 27.4 187.9 26.0 190.3 24.8C192.7 23.6 196.0 21.9 198.6 20.7C201.2 19.5 203.5 18.6 205.9 17.6C208.3 16.6 210.5 15.5 213.1 14.5C215.7 13.5 220.0 11.9 221.4 11.4M224.5 0.0C224.7 1.7 225.2 6.9 225.5 10.3C225.8 13.8 226.7 17.6 226.5 20.7C226.3 23.8 224.8 27.6 224.5 29.0M229.6 0.0C229.9 1.0 230.3 4.5 231.7 6.2C233.1 7.9 236.5 9.4 237.9 10.3C239.3 11.2 239.7 11.2 240.0 11.4M186.2 30.0C187.8 30.2 192.2 30.7 195.5 31.0C198.8 31.3 202.8 31.1 205.9 32.0C209.0 32.9 212.7 35.5 214.1 36.2M233.8 33.1C234.5 34.1 236.9 37.6 237.9 39.3C238.9 41.0 239.7 42.7 240.0 43.4M163.4 45.0C164.8 45.7 170.0 47.4 171.7 49.1C173.4 50.8 174.2 53.4 173.8 55.3C173.5 57.2 171.3 59.1 169.6 60.5C167.9 61.9 165.1 62.9 163.4 63.6C161.7 64.3 160.0 64.4 159.3 64.6M150.0 71.9C149.0 73.1 145.9 76.9 143.8 79.1C141.7 81.3 139.2 83.5 137.6 85.3C136.0 87.1 135.0 89.2 134.5 90.0M151.0 72.9C151.7 73.9 154.2 76.8 155.2 79.1C156.2 81.3 156.9 85.2 157.2 86.4M120.0 68.8C121.0 69.3 124.5 70.4 126.2 71.9C127.9 73.5 130.0 75.7 130.3 78.1C130.7 80.5 129.5 84.4 128.3 86.4C127.1 88.4 124.0 89.4 123.1 90.0M184.1 72.9C184.8 72.1 186.4 69.2 188.3 67.8C190.2 66.4 192.9 65.3 195.5 64.6C198.1 63.9 201.7 63.6 203.8 63.6C205.9 63.6 207.2 64.4 207.9 64.6M219.3 45.0C220.2 46.0 222.8 49.8 224.5 51.2C226.2 52.6 227.0 53.3 229.6 53.3C232.2 53.3 238.3 51.6 240.0 51.2M240.0 28.0C240.8 27.4 243.5 25.7 244.9 24.3C246.3 22.9 247.9 20.3 248.5 19.5M293.5 17.0C294.5 17.4 298.0 17.9 299.6 19.5C301.2 21.1 302.3 24.8 303.3 26.8C304.3 28.8 305.3 30.8 305.7 31.6M281.4 45.0C281.8 46.2 283.2 50.5 283.8 52.3C284.4 54.1 284.8 55.3 285.0 55.9M255.8 66.9C256.0 68.1 257.0 71.8 257.0 74.2C257.0 76.6 256.6 78.9 255.8 81.5C255.0 84.1 252.8 88.6 252.2 90.0M2.1 124.1C2.8 125.0 4.8 127.5 6.2 129.3C7.6 131.1 9.6 134.1 10.3 135.0M21.7 115.9C22.9 115.9 26.8 116.2 29.0 115.9C31.2 115.6 33.1 115.0 35.2 113.8C37.3 112.6 40.0 110.8 41.4 108.6C42.8 106.3 43.1 103.4 43.4 100.3C43.7 97.2 43.4 91.7 43.4 90.0M25.9 124.1C26.8 122.9 29.1 118.5 31.0 116.9C32.9 115.4 36.2 115.2 37.2 114.8M0.0 90.0C0.7 90.9 3.2 93.5 4.1 95.2C5.0 96.9 5.0 99.5 5.2 100.3M55.8 90.0C56.1 91.4 57.4 94.8 57.9 98.3C58.4 101.8 58.9 106.9 58.9 110.7C58.9 114.5 58.1 119.3 57.9 121.0M73.4 100.3C74.6 100.0 77.9 98.5 80.7 98.3C83.5 98.1 87.9 98.1 90.0 99.3C92.1 100.5 93.1 103.6 93.1 105.5C93.1 107.4 91.4 109.5 90.0 110.7C88.6 111.9 85.7 112.5 84.8 112.8M103.4 128.3L106.5 135.0M163.4 90.0C164.1 90.9 166.2 93.5 167.6 95.2C169.0 96.9 170.3 98.2 171.7 100.3C173.1 102.4 174.4 105.9 175.8 107.6C177.2 109.3 179.3 110.2 180.0 110.7M120.0 121.0C120.5 121.9 122.2 123.9 123.1 126.2C124.0 128.5 124.8 133.5 125.2 135.0M231.7 90.0C231.5 91.0 230.7 94.3 230.7 96.2C230.7 98.1 231.5 100.5 231.7 101.4M192.4 90.0C193.3 90.7 196.1 93.2 197.6 94.1C199.1 95.0 201.0 95.0 201.7 95.2M215.2 127.2C216.6 126.9 221.3 126.2 223.4 125.2C225.5 124.2 226.7 123.1 227.6 121.0C228.5 118.9 228.3 115.5 228.6 112.8C228.9 110.0 229.4 105.9 229.6 104.5M180.0 100.3C180.7 101.3 183.2 103.9 184.1 106.5C185.0 109.1 185.4 113.0 185.2 115.9C185.0 118.8 184.0 121.5 183.1 124.1C182.2 126.7 180.5 130.2 180.0 131.4M244.9 105.8C245.7 107.2 247.9 111.9 249.7 114.3C251.5 116.7 254.2 118.4 255.8 120.4C257.4 122.4 258.9 125.5 259.5 126.5M29.0 150.5C28.6 151.7 27.4 155.2 26.9 157.8C26.4 160.4 26.6 163.8 25.9 166.0C25.2 168.2 23.3 170.3 22.8 171.2M57.9 141.2C57.5 142.6 57.3 147.1 55.8 149.5C54.2 151.9 49.8 152.9 48.6 155.7C47.4 158.4 49.5 162.9 48.6 166.0C47.7 169.1 45.0 172.0 43.4 174.3C41.8 176.6 40.0 179.1 39.3 180.0M48.6 155.7C49.8 156.0 53.9 156.9 55.8 157.8C57.7 158.7 59.3 160.4 60.0 160.9M20.7 171.2L19.6 180.0M60.0 141.2C61.0 140.7 64.1 139.1 66.2 138.1C68.3 137.1 71.4 135.5 72.4 135.0M97.2 135.0C97.9 135.3 100.0 137.1 101.4 137.1C102.8 137.1 104.8 135.3 105.5 135.0M60.0 159.8C61.0 160.2 64.8 160.4 66.2 161.9C67.6 163.4 68.0 167.9 68.3 169.1M120.0 135.0C119.3 136.7 117.2 142.4 115.8 145.3C114.4 148.2 112.7 150.0 111.7 152.6C110.7 155.2 109.9 159.5 109.6 160.9M165.5 161.9C164.5 162.4 161.7 163.8 159.3 165.0C156.9 166.2 153.2 167.7 151.0 169.1C148.8 170.5 147.3 171.5 145.9 173.3C144.5 175.1 143.3 178.9 142.8 180.0M126.2 135.0C126.9 135.7 128.9 137.7 130.3 139.1C131.7 140.5 133.6 141.1 134.5 143.3C135.4 145.6 135.3 149.7 135.5 152.6C135.7 155.5 135.5 159.5 135.5 160.9M143.8 135.0C144.2 136.0 145.4 139.1 145.9 141.2C146.4 143.3 145.5 145.7 146.9 147.4C148.3 149.1 152.0 150.1 154.1 151.5C156.2 152.9 158.4 155.0 159.3 155.7M171.7 135.0C172.0 136.0 173.1 139.5 173.8 141.2C174.5 142.9 175.5 144.6 175.8 145.3M180.0 148.4C180.7 147.9 182.9 146.7 184.1 145.3C185.3 143.9 186.8 141.9 187.2 140.2C187.5 138.5 186.4 135.9 186.2 135.0M192.4 155.7C192.1 156.9 191.3 160.7 190.3 162.9C189.3 165.1 187.4 166.8 186.2 169.1C185.0 171.3 183.6 175.2 183.1 176.4M209.0 158.8C209.8 159.8 212.5 162.8 214.1 165.0C215.7 167.2 216.8 169.7 218.3 172.2C219.9 174.7 222.6 178.7 223.4 180.0M211.0 141.2C212.4 140.8 216.9 139.1 219.3 139.1C221.7 139.1 223.6 140.2 225.5 141.2C227.4 142.2 229.8 144.6 230.7 145.3M291.1 135.0C291.1 136.2 290.9 139.9 291.1 142.3C291.3 144.7 292.1 148.4 292.3 149.6M243.6 166.6C245.0 166.8 248.8 167.8 252.2 167.8C255.6 167.8 262.3 166.8 264.3 166.6M243.6 135.0C243.6 137.0 243.4 143.1 243.6 147.2C243.8 151.2 244.7 157.3 244.9 159.3M0.0 224.7C1.0 223.7 4.1 219.3 6.2 218.5C8.3 217.7 10.5 218.6 12.4 219.8C14.3 221.1 16.1 223.9 17.4 226.0C18.6 228.1 19.5 231.2 19.9 232.2M74.9 214.8C76.6 215.6 82.5 217.9 84.8 219.8C87.1 221.7 87.5 223.6 88.6 226.0C89.6 228.4 90.7 232.7 91.1 234.0M60.0 196.1C60.8 196.9 63.5 198.8 65.0 201.1C66.5 203.4 68.3 207.1 68.7 209.8C69.1 212.5 67.7 216.1 67.5 217.3M60.0 224.7C61.2 225.3 65.2 226.8 67.5 228.4C69.8 230.0 72.7 233.1 73.7 234.0M109.7 198.6C110.5 197.6 113.0 194.2 114.7 192.4C116.4 190.6 119.1 188.3 120.0 187.5M120.0 191.2C121.2 190.4 125.0 187.6 127.5 186.2C130.0 184.8 132.0 183.5 134.9 182.5C137.8 181.5 143.2 180.4 144.8 180.0M148.6 180.0C149.0 181.7 150.3 186.8 151.1 189.9C151.9 193.0 153.5 195.5 153.5 198.6C153.5 201.7 152.5 205.9 151.1 208.6C149.7 211.3 146.9 212.9 144.8 214.8C142.7 216.7 139.6 219.0 138.6 219.8M179.6 194.9C178.4 195.3 174.3 196.8 172.2 197.4C170.1 198.0 168.0 198.4 167.2 198.6M159.8 180.0C160.6 180.8 163.5 182.9 164.7 185.0C165.9 187.1 166.8 190.1 167.2 192.4C167.6 194.7 167.2 197.6 167.2 198.6M183.7 186.2C183.5 188.3 183.1 195.5 182.5 198.6C181.9 201.7 180.4 203.8 180.0 204.8M264.8 180.0C264.8 181.2 265.0 184.8 264.8 187.5C264.6 190.2 264.2 193.6 263.6 196.1C263.0 198.6 261.3 200.5 261.1 202.4C260.9 204.3 260.9 205.9 262.4 207.3C263.8 208.8 267.5 210.9 269.8 211.1C272.1 211.3 275.0 209.0 276.0 208.6"/><path fill="none" stroke="#8c8698" stroke-width="1.25" stroke-linecap="round" stroke-linejoin="round" d="M19.6 8.3C20.5 7.8 22.9 6.1 24.8 5.2C26.7 4.3 28.9 3.6 31.0 3.1C33.1 2.6 36.0 2.6 37.2 2.1C38.4 1.6 38.1 0.4 38.3 0.0M38.3 2.1C38.8 3.0 40.2 5.7 41.4 7.2C42.6 8.8 43.8 10.7 45.5 11.4C47.2 12.1 49.8 11.8 51.7 11.4C53.6 11.1 55.5 10.2 56.9 9.3C58.3 8.4 59.5 6.7 60.0 6.2M17.6 21.7C19.0 22.1 23.1 23.4 25.9 23.8C28.6 24.2 31.9 24.5 34.1 23.8C36.3 23.1 37.4 21.2 39.3 19.6C41.2 18.1 43.4 15.9 45.5 14.5C47.6 13.1 50.7 11.9 51.7 11.4M10.3 25.9C10.8 26.8 12.4 29.3 13.4 31.0C14.4 32.7 15.3 34.7 16.5 36.2C17.7 37.8 19.3 38.8 20.7 40.3C22.1 41.8 24.1 44.2 24.8 45.0M55.8 0.0C56.1 1.0 57.2 4.5 57.9 6.2C58.6 7.9 59.6 9.6 60.0 10.3M76.5 0.0C77.0 1.0 79.1 4.0 79.6 6.2C80.1 8.4 80.1 11.2 79.6 13.4C79.1 15.6 77.7 17.5 76.5 19.6C75.3 21.7 73.8 24.0 72.4 25.9C71.0 27.8 69.7 29.4 68.3 31.0C66.9 32.5 65.5 34.0 64.1 35.2C62.7 36.4 60.7 37.8 60.0 38.3M103.4 0.0C102.7 1.0 100.2 4.0 99.3 6.2C98.4 8.4 97.9 11.3 98.3 13.4C98.7 15.5 100.0 17.0 101.4 18.6C102.8 20.2 105.0 21.2 106.5 22.8C108.0 24.4 110.2 26.2 110.7 27.9C111.2 29.6 110.8 31.9 109.6 33.1C108.4 34.3 105.5 34.5 103.4 35.2C101.3 35.9 98.2 36.9 97.2 37.2M113.8 0.0C114.1 1.0 115.6 3.6 115.8 6.2C116.0 8.8 114.8 12.2 114.8 15.5C114.8 18.8 114.9 23.3 115.8 25.9C116.7 28.5 119.3 30.1 120.0 31.0M24.8 45.0C25.3 45.9 27.4 48.5 27.9 50.2C28.4 51.9 28.6 53.9 27.9 55.3C27.2 56.7 25.5 57.7 23.8 58.4C22.1 59.1 19.9 59.3 17.6 59.5C15.4 59.7 12.6 59.9 10.3 59.5C8.1 59.1 5.8 57.9 4.1 57.4C2.4 56.9 0.7 56.6 0.0 56.4M18.6 82.2C17.2 81.5 12.4 79.6 10.3 78.1C8.2 76.5 7.2 74.6 6.2 72.9C5.2 71.2 5.1 69.0 4.1 67.8C3.1 66.6 0.7 66.0 0.0 65.7M68.3 45.0C67.8 46.0 66.1 49.0 65.2 51.2C64.3 53.4 64.0 55.8 63.1 58.4C62.2 61.0 60.5 65.3 60.0 66.7M144.8 26.9C145.8 26.9 148.8 26.5 151.0 26.9C153.2 27.2 156.1 28.1 158.3 29.0C160.6 29.9 162.6 31.0 164.5 32.0C166.4 33.0 168.0 34.0 169.6 35.2C171.2 36.4 172.9 37.7 173.8 39.3C174.7 40.9 174.6 44.0 174.8 45.0M182.1 0.0C181.9 1.4 181.0 4.9 181.0 8.3C181.0 11.8 181.6 17.4 182.1 20.7C182.6 24.0 183.1 26.2 184.1 27.9C185.1 29.6 187.3 29.4 188.3 31.0C189.3 32.5 190.1 34.9 190.3 37.2C190.5 39.5 189.5 43.7 189.3 45.0M185.2 5.2C186.4 6.1 189.8 8.9 192.4 10.3C195.0 11.7 198.3 13.1 200.7 13.4C203.1 13.8 204.8 13.2 206.9 12.4C209.0 11.6 210.7 9.7 213.1 8.3C215.5 6.9 218.7 5.0 221.4 4.1C224.2 3.2 226.5 3.1 229.6 3.1C232.7 3.1 238.3 3.9 240.0 4.1M131.4 45.0C131.2 46.4 130.7 50.5 130.3 53.3C130.0 56.0 129.0 59.4 129.3 61.5C129.7 63.6 131.0 64.3 132.4 65.7C133.8 67.1 135.9 69.3 137.6 69.8C139.3 70.3 141.2 70.0 142.8 68.8C144.4 67.6 145.0 64.0 146.9 62.6C148.8 61.2 152.4 60.7 154.1 60.5C155.8 60.3 156.0 60.6 157.2 61.5C158.4 62.4 159.7 64.5 161.4 65.7C163.1 66.9 165.5 67.8 167.6 68.8C169.7 69.8 171.7 70.9 173.8 71.9C175.9 72.9 179.0 74.5 180.0 75.0M120.0 53.3C120.7 54.1 122.5 57.0 124.1 58.4C125.6 59.8 128.4 61.0 129.3 61.5M212.1 45.0C211.6 45.7 210.2 47.7 209.0 49.1C207.8 50.5 206.7 51.8 204.8 53.3C202.9 54.8 200.0 57.4 197.6 58.4C195.2 59.4 192.4 59.8 190.3 59.5C188.2 59.2 186.2 57.8 185.2 56.4C184.2 55.0 183.9 53.1 184.1 51.2C184.3 49.3 185.8 46.0 186.2 45.0M210.0 51.2C210.2 52.6 211.0 57.1 211.0 59.5C211.0 61.9 210.3 63.6 210.0 65.7C209.7 67.8 208.7 69.8 209.0 71.9C209.3 74.0 210.7 76.4 212.1 78.1C213.5 79.8 215.6 81.2 217.2 82.2C218.8 83.2 220.7 84.0 221.4 84.3M240.0 57.4C238.6 57.4 233.9 56.9 231.7 57.4C229.4 57.9 227.9 59.1 226.5 60.5C225.1 61.9 223.9 63.6 223.4 65.7C222.9 67.8 223.1 70.7 223.4 72.9C223.8 75.1 224.6 77.2 225.5 79.1C226.4 81.0 228.1 83.4 228.6 84.3M247.3 9.7C248.1 9.1 250.0 6.9 252.2 6.1C254.4 5.3 258.3 4.5 260.7 4.9C263.1 5.3 265.4 6.7 266.8 8.5C268.2 10.3 268.6 13.2 269.2 15.8C269.8 18.4 269.4 22.6 270.4 24.3C271.4 26.0 273.5 26.2 275.3 26.2C277.1 26.2 279.4 25.2 281.4 24.3C283.4 23.4 286.4 21.3 287.4 20.7M247.3 9.7C247.5 11.3 247.7 17.1 248.5 19.5C249.3 21.9 251.0 22.7 252.2 24.3C253.4 25.9 254.0 27.6 255.8 29.2C257.6 30.8 260.9 32.9 263.1 34.1C265.3 35.3 268.2 36.1 269.2 36.5M266.8 45.0C267.6 44.0 269.8 40.3 271.6 38.9C273.4 37.5 275.7 36.7 277.7 36.5C279.7 36.3 282.0 36.7 283.8 37.7C285.6 38.7 287.9 41.8 288.7 42.6M293.5 17.0C293.9 15.8 294.6 11.7 296.0 9.7C297.4 7.7 299.8 5.5 302.0 4.9C304.2 4.3 307.5 5.1 309.3 6.1C311.1 7.1 312.4 10.1 313.0 10.9M287.4 20.7C288.0 20.3 290.1 18.8 291.1 18.2C292.1 17.6 293.1 17.2 293.5 17.0M247.3 45.0C248.5 45.8 252.0 48.7 254.6 49.9C257.2 51.1 260.9 52.3 263.1 52.3C265.3 52.3 267.0 51.1 268.0 49.9C269.0 48.7 269.0 45.8 269.2 45.0M291.1 65.7C292.1 65.1 295.0 62.8 297.2 62.0C299.4 61.2 301.9 61.2 304.5 60.8C307.1 60.4 311.6 59.8 313.0 59.6M288.7 73.0C289.7 72.6 292.5 71.1 294.7 70.5C296.9 69.9 300.2 68.9 302.0 69.3C303.8 69.7 304.9 71.0 305.7 73.0C306.5 75.0 306.9 78.7 306.9 81.5C306.9 84.3 305.9 88.6 305.7 90.0M43.4 135.0C43.8 133.9 44.5 130.1 45.5 128.3C46.5 126.5 47.9 124.8 49.6 124.1C51.3 123.4 54.1 123.9 55.8 124.1C57.5 124.3 59.3 125.0 60.0 125.2M60.0 107.6C61.7 107.7 67.4 107.6 70.3 108.1C73.2 108.6 75.3 109.4 77.6 110.7C79.8 112.0 81.7 114.4 83.8 115.9C85.9 117.5 88.5 118.6 90.0 120.0C91.5 121.4 92.2 122.7 93.1 124.1C94.0 125.5 93.5 127.6 95.2 128.3C96.9 129.0 101.0 129.2 103.4 128.3C105.8 127.4 108.2 125.2 109.6 123.1C111.0 121.0 111.0 118.2 111.7 115.9C112.4 113.7 112.6 111.8 113.8 109.6C115.0 107.3 118.1 103.6 118.9 102.4M70.3 108.1C69.8 107.1 67.7 104.4 67.2 102.4C66.7 100.4 66.5 97.9 67.2 96.2C67.9 94.5 69.2 92.8 71.4 92.1C73.7 91.4 78.6 92.4 80.7 92.1C82.8 91.8 83.3 90.3 83.8 90.0M80.7 92.1C81.9 91.9 85.3 91.0 87.9 91.0C90.5 91.0 93.4 91.9 96.2 92.1C99.0 92.3 102.1 91.6 104.5 92.1C106.9 92.6 109.0 93.7 110.7 95.2C112.4 96.8 113.4 100.2 114.8 101.4C116.2 102.6 118.2 102.2 118.9 102.4M60.0 122.1C61.0 121.6 63.8 119.5 66.2 119.0C68.6 118.5 72.4 118.3 74.5 119.0C76.6 119.7 78.1 121.4 78.6 123.1C79.1 124.8 78.6 127.6 77.6 129.3C76.6 131.0 73.3 132.7 72.4 133.4M134.5 90.0C134.0 90.7 132.4 92.5 131.4 94.1C130.4 95.6 129.5 97.9 128.3 99.3C127.1 100.7 125.5 101.7 124.1 102.4C122.7 103.1 120.7 103.2 120.0 103.4M140.7 106.5C141.7 106.7 145.3 106.4 146.9 107.6C148.5 108.8 150.0 111.9 150.0 113.8C150.0 115.7 148.1 117.6 146.9 119.0C145.7 120.4 144.2 122.3 142.8 122.1C141.4 121.9 139.7 119.6 138.6 117.9C137.5 116.2 136.2 113.6 136.5 111.7C136.8 109.8 140.0 107.4 140.7 106.5M149.0 90.0C149.3 91.4 149.8 96.1 151.0 98.3C152.2 100.5 154.8 101.3 156.2 103.4C157.6 105.5 158.8 107.8 159.3 110.7C159.8 113.6 159.5 117.9 159.3 121.0C159.1 124.1 158.3 127.0 158.3 129.3C158.3 131.6 159.1 134.1 159.3 135.0M200.7 90.0C201.2 91.0 202.9 94.1 203.8 96.2C204.7 98.3 205.4 100.5 205.9 102.4C206.4 104.3 207.4 105.7 206.9 107.6C206.4 109.5 204.0 111.6 202.8 113.8C201.6 116.0 199.9 118.6 199.6 121.0C199.2 123.4 199.8 126.2 200.7 128.3C201.6 130.4 203.8 132.3 204.8 133.4C205.8 134.5 206.6 134.7 206.9 135.0M272.8 115.5C271.8 116.1 268.4 117.8 266.8 119.2C265.2 120.6 263.5 122.3 263.1 124.1C262.7 125.9 263.9 128.3 264.3 130.1C264.7 131.9 265.3 134.2 265.5 135.0M300.8 90.0C300.2 90.8 298.2 93.3 297.2 94.9C296.2 96.5 294.9 98.1 294.7 99.7C294.5 101.3 295.0 103.2 296.0 104.6C297.0 106.0 299.2 107.4 300.8 108.2C302.4 109.0 303.7 109.7 305.7 109.5C307.7 109.3 311.8 107.4 313.0 107.0M277.7 116.8C278.7 116.4 282.0 115.7 283.8 114.3C285.6 112.9 287.1 110.2 288.7 108.2C290.3 106.2 292.5 103.6 293.5 102.2C294.5 100.8 294.5 100.1 294.7 99.7M281.4 121.6C283.0 121.2 288.1 119.4 291.1 119.2C294.1 119.0 297.2 119.6 299.6 120.4C302.0 121.2 303.5 123.1 305.7 124.1C307.9 125.1 311.8 126.1 313.0 126.5M41.4 135.0C41.0 136.4 40.7 141.1 39.3 143.3C37.9 145.5 35.3 147.0 33.1 148.4C30.9 149.8 28.0 150.6 25.9 151.5C23.8 152.4 22.9 152.4 20.7 153.6C18.4 154.8 13.8 157.9 12.4 158.8M72.4 169.1C73.3 168.9 76.4 167.2 77.6 168.1C78.8 169.0 79.4 172.6 79.6 174.3C79.8 176.0 79.6 177.7 78.6 178.4C77.6 179.1 74.6 179.4 73.4 178.4C72.2 177.4 71.6 173.8 71.4 172.2C71.2 170.6 72.2 169.6 72.4 169.1M103.4 180.0C103.8 178.4 104.5 172.5 105.5 170.2C106.5 167.9 107.9 166.5 109.6 166.0C111.3 165.5 114.1 166.2 115.8 167.1C117.5 168.0 119.3 170.5 120.0 171.2M180.0 145.3C179.0 146.3 176.2 149.8 173.8 151.5C171.4 153.2 168.3 154.8 165.5 155.7C162.7 156.6 159.8 156.3 157.2 156.7C154.6 157.0 152.1 156.8 150.0 157.8C147.9 158.8 146.5 161.2 144.8 162.9C143.1 164.6 141.3 166.4 139.6 168.1C137.9 169.8 136.2 171.3 134.5 173.3C132.8 175.3 130.2 178.9 129.3 180.0M192.4 155.7C193.8 155.0 197.9 152.7 200.7 151.5C203.5 150.3 206.6 148.4 209.0 148.4C211.4 148.4 212.8 150.5 215.2 151.5C217.6 152.5 220.7 153.5 223.4 154.6C226.2 155.7 228.9 156.4 231.7 157.8C234.5 159.2 238.6 162.1 240.0 162.9M268.0 135.0C268.8 136.0 271.2 138.9 272.8 141.1C274.4 143.3 277.1 146.0 277.7 148.4C278.3 150.8 277.5 153.5 276.5 155.7C275.5 157.9 273.2 160.0 271.6 161.8C270.0 163.6 267.6 164.8 266.8 166.6C266.0 168.4 266.6 170.5 266.8 172.7C267.0 174.9 267.8 178.8 268.0 180.0M277.7 148.4C279.1 148.4 283.6 148.0 286.2 148.4C288.8 148.8 291.1 149.4 293.5 150.8C295.9 152.2 298.4 155.3 300.8 156.9C303.2 158.5 306.1 159.5 308.1 160.5C310.1 161.5 312.2 162.6 313.0 163.0M298.4 150.8C299.4 149.8 302.1 146.1 304.5 144.7C306.9 143.3 311.6 142.7 313.0 142.3M308.1 161.8C308.5 163.0 310.6 166.7 310.6 169.1C310.6 171.5 308.9 174.6 308.1 176.4C307.3 178.2 306.1 179.4 305.7 180.0M48.4 194.9C49.0 195.9 51.4 199.2 52.2 201.1C53.0 203.0 52.6 204.6 53.4 206.1C54.2 207.6 56.0 208.8 57.1 209.8C58.2 210.8 59.5 211.9 60.0 212.3M21.1 180.0C20.3 181.2 18.0 185.0 16.1 187.5C14.2 190.0 12.0 192.6 9.9 194.9C7.8 197.2 5.4 199.4 3.7 201.1C2.0 202.8 0.6 204.2 0.0 204.8M34.8 187.5C34.6 188.7 33.9 192.4 33.5 194.9C33.1 197.4 33.8 200.1 32.3 202.4C30.8 204.7 26.9 206.9 24.8 208.6C22.7 210.2 20.9 210.9 19.9 212.3C18.9 213.8 18.4 215.7 18.6 217.3C18.8 219.0 20.1 220.5 21.1 222.2C22.1 223.8 23.1 225.8 24.8 227.2C26.5 228.6 30.1 230.3 31.1 230.9M24.8 227.2C26.5 227.6 31.7 229.7 34.8 229.7C37.9 229.7 40.6 227.8 43.5 227.2C46.4 226.6 49.5 226.0 52.2 226.0C55.0 226.0 58.7 227.0 60.0 227.2M119.6 180.0C118.8 180.6 116.2 182.0 114.7 183.7C113.2 185.3 111.7 187.4 110.9 189.9C110.1 192.4 109.7 196.1 109.7 198.6C109.7 201.1 110.1 202.9 110.9 204.8C111.7 206.7 113.2 208.4 114.7 209.8C116.2 211.2 119.1 212.9 120.0 213.5M84.8 185.0C86.5 185.6 91.9 187.2 94.8 188.7C97.7 190.1 100.5 191.8 102.2 193.7C103.9 195.6 104.7 197.8 104.7 199.9C104.7 202.0 103.4 204.4 102.2 206.1C101.0 207.8 99.4 209.0 97.3 209.8C95.2 210.6 91.0 210.9 89.8 211.1M84.8 185.0C84.0 185.0 81.6 183.8 79.9 185.0C78.2 186.2 75.9 189.9 74.9 192.4C73.9 194.9 73.7 197.2 73.7 199.9C73.7 202.6 73.9 206.7 74.9 208.6C75.9 210.5 77.8 210.3 79.9 211.1C82.0 211.9 86.1 213.1 87.3 213.5M87.3 213.5C88.1 214.6 90.6 218.4 92.3 219.8C94.0 221.2 94.8 222.8 97.3 222.2C99.8 221.6 104.9 218.9 107.2 216.0C109.5 213.1 110.3 206.7 110.9 204.8M60.0 221.0C61.2 220.4 65.0 218.3 67.5 217.3C70.0 216.3 71.6 215.4 74.9 214.8C78.2 214.2 85.2 213.7 87.3 213.5M120.0 213.5C120.8 213.9 123.1 214.9 125.0 216.0C126.9 217.1 129.3 218.6 131.2 219.8C133.0 221.1 134.9 222.3 136.1 223.5C137.3 224.7 137.1 226.2 138.6 227.2C140.1 228.2 142.5 229.1 144.8 229.7C147.1 230.3 151.1 230.7 152.3 230.9M172.2 197.4C171.4 198.6 168.4 202.3 167.2 204.8C165.9 207.3 165.5 209.8 164.7 212.3C163.9 214.8 162.8 217.3 162.2 219.8C161.6 222.3 160.8 224.8 161.0 227.2C161.2 229.6 163.1 232.9 163.5 234.0M187.5 180.0C188.7 181.0 192.6 184.1 194.9 186.2C197.2 188.3 199.4 190.3 201.1 192.4C202.8 194.5 204.6 196.3 204.8 198.6C205.0 200.9 203.9 203.8 202.4 206.1C200.9 208.4 198.4 210.2 196.1 212.3C193.8 214.4 190.8 216.2 188.7 218.5C186.6 220.8 184.9 223.4 183.7 226.0C182.4 228.6 181.6 232.7 181.2 234.0M204.8 198.6C205.9 199.2 209.4 200.3 211.1 202.4C212.8 204.5 213.2 208.6 214.8 211.1C216.5 213.6 218.5 215.7 221.0 217.3C223.5 219.0 227.0 219.6 229.7 221.0C232.4 222.4 235.9 225.2 237.1 226.0M204.8 185.0C206.2 184.6 210.6 181.9 213.5 182.5C216.4 183.1 219.5 186.8 222.2 188.7C224.9 190.6 228.4 192.9 229.7 193.7M257.4 211.1C257.2 209.7 256.9 205.5 256.1 202.4C255.3 199.3 253.8 195.3 252.4 192.4C251.0 189.5 248.7 187.1 247.5 185.0C246.3 182.9 245.4 180.8 245.0 180.0M263.6 217.3C265.1 217.1 269.4 216.6 272.3 216.0C275.2 215.4 278.5 214.7 281.0 213.5C283.5 212.3 285.6 210.2 287.2 208.6C288.8 206.9 289.0 204.4 290.9 203.6C292.8 202.8 296.1 203.4 298.4 203.6C300.7 203.8 303.0 203.6 304.6 204.8C306.2 206.1 307.5 208.8 308.3 211.1C309.1 213.4 308.8 216.2 309.6 218.5C310.4 220.8 312.4 223.7 313.0 224.7M290.9 203.6C290.7 202.2 289.3 197.6 289.7 194.9C290.1 192.2 291.8 190.0 293.4 187.5C295.0 185.0 298.6 181.2 299.6 180.0M269.8 221.0C271.1 221.8 274.0 224.8 277.3 226.0C280.6 227.2 285.6 228.2 289.7 228.4C293.8 228.6 298.2 227.8 302.1 227.2C306.0 226.6 311.2 225.1 313.0 224.7"/><path fill="none" stroke="#747086" stroke-width="2.0" stroke-linecap="round" stroke-linejoin="round" d="M21.7 0.0C21.5 0.9 21.2 3.5 20.7 5.2C20.2 6.9 19.1 8.4 18.6 10.3C18.1 12.2 17.8 14.6 17.6 16.5C17.4 18.4 18.5 20.3 17.6 21.7C16.7 23.1 14.3 23.8 12.4 24.8C10.5 25.8 8.3 27.2 6.2 27.9C4.1 28.6 1.0 28.8 0.0 29.0M82.8 45.0C83.5 44.0 85.5 40.9 86.9 39.3C88.3 37.7 89.8 35.7 91.0 35.2C92.2 34.7 93.1 35.9 94.1 36.2C95.1 36.5 96.7 37.0 97.2 37.2M60.0 58.4C59.3 60.0 57.5 65.4 55.8 67.8C54.1 70.2 51.5 71.2 49.6 72.9C47.7 74.6 45.9 76.4 44.5 78.1C43.1 79.8 43.3 81.9 41.4 83.3C39.5 84.7 35.7 86.1 33.1 86.4C30.5 86.7 28.3 86.0 25.9 85.3C23.5 84.6 19.8 82.7 18.6 82.2M82.8 45.0C82.5 46.0 81.4 48.8 80.7 51.2C80.0 53.6 78.8 56.9 78.6 59.5C78.4 62.1 78.7 64.6 79.6 66.7C80.5 68.8 82.1 70.5 83.8 71.9C85.5 73.3 88.3 74.0 90.0 75.0C91.7 76.0 92.9 76.7 94.1 78.1C95.3 79.5 96.0 81.3 97.2 83.3C98.4 85.3 100.7 88.9 101.4 90.0M169.6 0.0C169.3 0.7 169.0 2.9 167.6 4.1C166.2 5.3 163.7 6.3 161.4 7.2C159.2 8.1 156.0 8.6 154.1 9.3C152.2 10.0 151.0 10.0 150.0 11.4C149.0 12.8 148.6 15.7 147.9 17.6C147.2 19.5 146.4 21.2 145.9 22.8C145.4 24.4 145.0 26.2 144.8 26.9M144.8 26.9C144.5 27.6 143.7 29.6 142.8 31.0C141.9 32.4 141.0 33.8 139.6 35.2C138.2 36.6 136.1 37.9 134.5 39.3C132.9 40.7 131.3 42.4 130.3 43.4C129.3 44.4 128.6 44.7 128.3 45.0M240.0 33.1C238.3 33.1 232.4 32.8 229.6 33.1C226.8 33.5 225.3 34.3 223.4 35.2C221.5 36.1 219.7 37.3 218.3 38.3C216.9 39.3 216.1 40.3 215.2 41.4C214.3 42.5 213.4 44.4 213.1 45.0M160.0 66.0C161.7 67.2 166.5 70.5 170.0 73.0C173.5 75.5 177.3 78.7 181.0 81.0C184.7 83.3 188.8 85.2 192.0 87.0C195.2 88.8 197.8 90.0 200.0 92.0C202.2 94.0 203.8 96.7 205.0 99.0C206.2 101.3 207.6 103.7 207.5 106.0C207.4 108.3 205.0 111.8 204.5 113.0M287.4 20.7C287.6 21.9 287.9 26.0 288.7 28.0C289.5 30.0 290.7 31.7 292.3 32.8C293.9 33.9 296.2 34.7 298.4 34.7C300.6 34.7 303.3 33.1 305.7 32.8C308.1 32.5 311.8 32.8 313.0 32.8M242.4 45.0C242.6 46.2 243.2 49.9 243.6 52.3C244.0 54.7 243.9 57.6 244.9 59.6C245.9 61.6 248.1 63.3 249.7 64.5C251.3 65.7 253.2 67.1 254.6 66.9C256.0 66.7 256.8 64.8 258.2 63.2C259.6 61.6 261.3 58.8 263.1 57.2C264.9 55.6 267.0 54.1 269.2 53.5C271.4 52.9 273.9 53.1 276.5 53.5C279.1 53.9 282.8 54.7 285.0 55.9C287.2 57.1 288.9 59.2 289.9 60.8C290.9 62.4 291.3 64.1 291.1 65.7C290.9 67.3 289.7 68.7 288.7 70.5C287.7 72.3 286.2 74.8 285.0 76.6C283.8 78.4 282.8 79.9 281.4 81.5C280.0 83.1 277.9 85.0 276.5 86.4C275.1 87.8 273.4 89.4 272.8 90.0M42.4 90.0C41.7 90.5 40.2 91.7 38.3 93.1C36.4 94.5 33.1 96.8 31.0 98.3C28.9 99.8 27.3 100.7 25.9 102.4C24.5 104.1 23.5 106.3 22.8 108.6C22.1 110.8 22.2 113.3 21.7 115.9C21.2 118.5 20.5 121.5 19.6 124.1C18.7 126.7 17.4 129.6 16.5 131.4C15.7 133.2 14.8 134.4 14.5 135.0M231.7 101.4C232.4 101.7 234.4 102.9 235.8 103.4C237.2 103.9 239.3 104.3 240.0 104.5M253.4 90.0C252.8 91.0 251.1 94.5 249.7 96.1C248.3 97.7 246.5 98.5 244.9 99.7C243.3 100.9 240.8 102.8 240.0 103.4M276.5 90.0C275.7 91.0 273.2 94.3 271.6 96.1C270.0 97.9 267.2 99.1 266.8 100.9C266.4 102.7 268.4 105.0 269.2 107.0C270.0 109.0 271.0 111.7 271.6 113.1C272.2 114.5 271.8 114.9 272.8 115.5C273.8 116.1 276.3 115.8 277.7 116.8C279.1 117.8 280.4 120.0 281.4 121.6C282.4 123.2 283.0 124.9 283.8 126.5C284.6 128.1 285.4 130.0 286.2 131.4C287.0 132.8 288.3 134.4 288.7 135.0M14.5 135.0C14.0 136.0 11.9 138.6 11.4 141.2C10.9 143.8 11.2 147.6 11.4 150.5C11.6 153.4 11.7 156.2 12.4 158.8C13.1 161.4 14.1 163.9 15.5 166.0C16.9 168.1 18.8 170.0 20.7 171.2C22.6 172.4 24.8 172.4 26.9 173.3C29.0 174.2 31.6 175.3 33.1 176.4C34.7 177.5 35.7 179.4 36.2 180.0M240.0 163.0C240.6 163.6 242.6 165.0 243.6 166.6C244.6 168.2 245.7 170.5 246.1 172.7C246.5 174.9 246.1 178.8 246.1 180.0M36.0 180.0C36.8 181.0 39.5 184.3 41.0 186.2C42.5 188.1 43.5 189.8 44.7 191.2C45.9 192.6 47.1 193.9 48.4 194.9C49.6 195.9 50.3 196.8 52.2 197.4C54.1 198.0 58.4 198.4 59.6 198.6M229.7 193.7C230.3 194.3 232.2 195.9 233.4 197.4C234.6 198.9 236.0 201.0 237.1 202.4C238.2 203.8 239.5 205.5 240.0 206.1M240.0 206.1C240.8 206.7 242.9 209.2 245.0 209.8C247.1 210.4 250.3 209.6 252.4 209.8C254.5 210.0 256.1 210.3 257.4 211.1C258.6 211.9 258.9 213.6 259.9 214.8C260.9 216.0 262.4 217.1 263.6 218.5C264.8 219.9 266.5 221.6 267.3 223.5C268.1 225.4 268.2 227.9 268.6 229.7C269.0 231.4 269.6 233.3 269.8 234.0M240.0 186.2C240.8 185.6 244.0 183.5 245.0 182.5C246.0 181.5 246.0 180.4 246.2 180.0M296.0 92.0C296.8 91.4 299.2 89.3 301.0 88.5C302.8 87.7 304.5 87.5 306.5 87.2C308.5 86.9 311.9 86.6 313.0 86.5M128.0 218.0C128.8 218.6 131.5 220.3 133.0 221.5C134.5 222.7 135.8 223.8 137.0 225.0C138.2 226.2 138.8 227.7 140.0 228.5C141.2 229.3 143.3 229.8 144.0 230.0"/><path fill="none" stroke="#c8c2d2" stroke-width="1.2" stroke-linecap="round" stroke-linejoin="round" d="M21.7 0.0C21.5 0.9 21.2 3.5 20.7 5.2C20.2 6.9 19.1 8.4 18.6 10.3C18.1 12.2 17.8 14.6 17.6 16.5C17.4 18.4 18.5 20.3 17.6 21.7C16.7 23.1 14.3 23.8 12.4 24.8C10.5 25.8 8.3 27.2 6.2 27.9C4.1 28.6 1.0 28.8 0.0 29.0M82.8 45.0C83.5 44.0 85.5 40.9 86.9 39.3C88.3 37.7 89.8 35.7 91.0 35.2C92.2 34.7 93.1 35.9 94.1 36.2C95.1 36.5 96.7 37.0 97.2 37.2M60.0 58.4C59.3 60.0 57.5 65.4 55.8 67.8C54.1 70.2 51.5 71.2 49.6 72.9C47.7 74.6 45.9 76.4 44.5 78.1C43.1 79.8 43.3 81.9 41.4 83.3C39.5 84.7 35.7 86.1 33.1 86.4C30.5 86.7 28.3 86.0 25.9 85.3C23.5 84.6 19.8 82.7 18.6 82.2M82.8 45.0C82.5 46.0 81.4 48.8 80.7 51.2C80.0 53.6 78.8 56.9 78.6 59.5C78.4 62.1 78.7 64.6 79.6 66.7C80.5 68.8 82.1 70.5 83.8 71.9C85.5 73.3 88.3 74.0 90.0 75.0C91.7 76.0 92.9 76.7 94.1 78.1C95.3 79.5 96.0 81.3 97.2 83.3C98.4 85.3 100.7 88.9 101.4 90.0M169.6 0.0C169.3 0.7 169.0 2.9 167.6 4.1C166.2 5.3 163.7 6.3 161.4 7.2C159.2 8.1 156.0 8.6 154.1 9.3C152.2 10.0 151.0 10.0 150.0 11.4C149.0 12.8 148.6 15.7 147.9 17.6C147.2 19.5 146.4 21.2 145.9 22.8C145.4 24.4 145.0 26.2 144.8 26.9M144.8 26.9C144.5 27.6 143.7 29.6 142.8 31.0C141.9 32.4 141.0 33.8 139.6 35.2C138.2 36.6 136.1 37.9 134.5 39.3C132.9 40.7 131.3 42.4 130.3 43.4C129.3 44.4 128.6 44.7 128.3 45.0M240.0 33.1C238.3 33.1 232.4 32.8 229.6 33.1C226.8 33.5 225.3 34.3 223.4 35.2C221.5 36.1 219.7 37.3 218.3 38.3C216.9 39.3 216.1 40.3 215.2 41.4C214.3 42.5 213.4 44.4 213.1 45.0M160.0 66.0C161.7 67.2 166.5 70.5 170.0 73.0C173.5 75.5 177.3 78.7 181.0 81.0C184.7 83.3 188.8 85.2 192.0 87.0C195.2 88.8 197.8 90.0 200.0 92.0C202.2 94.0 203.8 96.7 205.0 99.0C206.2 101.3 207.6 103.7 207.5 106.0C207.4 108.3 205.0 111.8 204.5 113.0M287.4 20.7C287.6 21.9 287.9 26.0 288.7 28.0C289.5 30.0 290.7 31.7 292.3 32.8C293.9 33.9 296.2 34.7 298.4 34.7C300.6 34.7 303.3 33.1 305.7 32.8C308.1 32.5 311.8 32.8 313.0 32.8M242.4 45.0C242.6 46.2 243.2 49.9 243.6 52.3C244.0 54.7 243.9 57.6 244.9 59.6C245.9 61.6 248.1 63.3 249.7 64.5C251.3 65.7 253.2 67.1 254.6 66.9C256.0 66.7 256.8 64.8 258.2 63.2C259.6 61.6 261.3 58.8 263.1 57.2C264.9 55.6 267.0 54.1 269.2 53.5C271.4 52.9 273.9 53.1 276.5 53.5C279.1 53.9 282.8 54.7 285.0 55.9C287.2 57.1 288.9 59.2 289.9 60.8C290.9 62.4 291.3 64.1 291.1 65.7C290.9 67.3 289.7 68.7 288.7 70.5C287.7 72.3 286.2 74.8 285.0 76.6C283.8 78.4 282.8 79.9 281.4 81.5C280.0 83.1 277.9 85.0 276.5 86.4C275.1 87.8 273.4 89.4 272.8 90.0M42.4 90.0C41.7 90.5 40.2 91.7 38.3 93.1C36.4 94.5 33.1 96.8 31.0 98.3C28.9 99.8 27.3 100.7 25.9 102.4C24.5 104.1 23.5 106.3 22.8 108.6C22.1 110.8 22.2 113.3 21.7 115.9C21.2 118.5 20.5 121.5 19.6 124.1C18.7 126.7 17.4 129.6 16.5 131.4C15.7 133.2 14.8 134.4 14.5 135.0M231.7 101.4C232.4 101.7 234.4 102.9 235.8 103.4C237.2 103.9 239.3 104.3 240.0 104.5M253.4 90.0C252.8 91.0 251.1 94.5 249.7 96.1C248.3 97.7 246.5 98.5 244.9 99.7C243.3 100.9 240.8 102.8 240.0 103.4M276.5 90.0C275.7 91.0 273.2 94.3 271.6 96.1C270.0 97.9 267.2 99.1 266.8 100.9C266.4 102.7 268.4 105.0 269.2 107.0C270.0 109.0 271.0 111.7 271.6 113.1C272.2 114.5 271.8 114.9 272.8 115.5C273.8 116.1 276.3 115.8 277.7 116.8C279.1 117.8 280.4 120.0 281.4 121.6C282.4 123.2 283.0 124.9 283.8 126.5C284.6 128.1 285.4 130.0 286.2 131.4C287.0 132.8 288.3 134.4 288.7 135.0M14.5 135.0C14.0 136.0 11.9 138.6 11.4 141.2C10.9 143.8 11.2 147.6 11.4 150.5C11.6 153.4 11.7 156.2 12.4 158.8C13.1 161.4 14.1 163.9 15.5 166.0C16.9 168.1 18.8 170.0 20.7 171.2C22.6 172.4 24.8 172.4 26.9 173.3C29.0 174.2 31.6 175.3 33.1 176.4C34.7 177.5 35.7 179.4 36.2 180.0M240.0 163.0C240.6 163.6 242.6 165.0 243.6 166.6C244.6 168.2 245.7 170.5 246.1 172.7C246.5 174.9 246.1 178.8 246.1 180.0M36.0 180.0C36.8 181.0 39.5 184.3 41.0 186.2C42.5 188.1 43.5 189.8 44.7 191.2C45.9 192.6 47.1 193.9 48.4 194.9C49.6 195.9 50.3 196.8 52.2 197.4C54.1 198.0 58.4 198.4 59.6 198.6M229.7 193.7C230.3 194.3 232.2 195.9 233.4 197.4C234.6 198.9 236.0 201.0 237.1 202.4C238.2 203.8 239.5 205.5 240.0 206.1M240.0 206.1C240.8 206.7 242.9 209.2 245.0 209.8C247.1 210.4 250.3 209.6 252.4 209.8C254.5 210.0 256.1 210.3 257.4 211.1C258.6 211.9 258.9 213.6 259.9 214.8C260.9 216.0 262.4 217.1 263.6 218.5C264.8 219.9 266.5 221.6 267.3 223.5C268.1 225.4 268.2 227.9 268.6 229.7C269.0 231.4 269.6 233.3 269.8 234.0M240.0 186.2C240.8 185.6 244.0 183.5 245.0 182.5C246.0 181.5 246.0 180.4 246.2 180.0M296.0 92.0C296.8 91.4 299.2 89.3 301.0 88.5C302.8 87.7 304.5 87.5 306.5 87.2C308.5 86.9 311.9 86.6 313.0 86.5M128.0 218.0C128.8 218.6 131.5 220.3 133.0 221.5C134.5 222.7 135.8 223.8 137.0 225.0C138.2 226.2 138.8 227.7 140.0 228.5C141.2 229.3 143.3 229.8 144.0 230.0"/></svg></div>
<!-- vertical scroll -->
<div class="a" style="left:421px;top:63px;width:10px;height:357px;background:linear-gradient(90deg,#d8d8d0,#fafaf4 30%,#f6f6ee)"></div>
<div class="a" style="left:423px;top:67px;width:6px;height:6px;border:1px solid #ccc"></div>
<!-- status bar -->
<div class="a" style="left:38px;top:420px;width:152px;height:10px;background:#d6d6d6;border-top:1px solid #b8b8b8"></div>
<div class="a" style="left:38px;top:421px;width:30px;height:9px;background:#f2f2f2"></div>
<div class="t" style="left:39px;top:422px;font-size:7px;color:#111">66.67%</div>
<div class="a" style="left:67px;top:421px;width:10px;height:9px;background:#d0d0d0;border:1px solid #aaa"></div>
<div class="t" style="left:100px;top:422px;font-size:7px;color:#111">文档:1.37M/1.60M</div>
<div class="a" style="left:176px;top:421px;width:1px;height:9px;background:#aaa"></div><div class="a" style="left:188px;top:421px;width:1px;height:9px;background:#aaa"></div><svg style="left:180px;top:422px" width="4" height="6"><path d="M0 0L4 3L0 6Z" fill="#111"/></svg>
<div class="a" style="left:190px;top:420px;width:231px;height:10px;background:linear-gradient(#e2e2dc,#fafaf4 35%,#f4f4ec)"></div>
<div class="a" style="left:421px;top:420px;width:10px;height:10px;background:#f2f2ec"></div><div class="a" style="left:0;top:430px;width:600px;height:1px;background:#dcdee6"></div>
<div class="a" style="left:0;top:431px;width:600px;height:4px;background:#3b6fc6"></div>
<div class="a" style="left:0;top:431px;width:55px;height:4px;background:#3f9c44"></div>

<!-- ===== RIGHT DOCK ===== -->
<div class="a" style="left:431px;top:52px;width:166px;height:378px;background:#6a6a6a"></div>
<div class="a" style="left:431px;top:52px;width:166px;height:7px;background:linear-gradient(#4a4a4a,#2e2e2e)"></div>
<div class="t" style="left:445px;top:52px;font-size:6px;color:#ddd">«</div>
<div class="t" style="left:588px;top:52px;font-size:6px;color:#ddd">»</div>
<div class="a" style="left:431px;top:59px;width:21px;height:130px;background:#d5d5d5;border-right:1px solid #8c8c8c;border-left:1px solid #ececec"></div>
<div class="a" style="left:433px;top:62px;width:17px;height:2px;background:#c4c4c4"></div>
<div class="a" style="left:432px;top:84px;width:19px;height:1px;background:#a8a8a8"></div>
<div class="a" style="left:432px;top:144px;width:19px;height:1px;background:#a8a8a8"></div>
<svg style="left:436px;top:69px" width="11" height="11"><path d="M1 2H4V9H1M2 5H4" stroke="#333" stroke-width="1.3" fill="none"/><path d="M6 1C10 2 10 8 6 10" stroke="#333" stroke-width="1.6" fill="none"/></svg>
<svg style="left:435px;top:96px" width="13" height="8"><path d="M0 2H5M7 2H12M0 6H12" stroke="#222" stroke-width="1.4"/><path d="M5 1L8 3L5 4" fill="#444"/></svg>
<svg style="left:436px;top:112px" width="11" height="11"><path d="M2 0L4 3H2ZM7 0V3M3 4H8V6H3Z" fill="#333"/><circle cx="5" cy="8.5" r="2" fill="#222"/><circle cx="5" cy="8.5" r="0.9" fill="#eee"/></svg>
<svg style="left:436px;top:129px" width="11" height="11"><path d="M3 0H5V6H10V9H1V6H3Z" fill="none" stroke="#333" stroke-width="1.1"/><rect x="0" y="9" width="11" height="2" fill="#444"/></svg>
<div class="t" style="left:436px;top:156px;font-size:10px;color:#333">A</div>
<div class="a" style="left:444px;top:155px;width:1px;height:10px;background:#333"></div>
<div class="t" style="left:437px;top:173px;font-size:9px;color:#333;font-weight:bold">¶</div>
<!-- color panel -->
<div class="a" style="left:452px;top:59px;width:145px;height:10px;background:#8b8b8b"></div>
<div class="a" style="left:474px;top:59px;width:45px;height:10px;background:#979797"></div>
<div class="a" style="left:453px;top:59px;width:21px;height:10px;background:#d6d6d6;border-top:1px solid #eee"></div>
<div class="t" style="left:457px;top:61px;font-size:7px;color:#444">颜色</div>
<div class="t" style="left:478px;top:61px;font-size:7px;color:#c4c4c4">色板 | 样式</div>
<div class="t" style="left:586px;top:60px;font-size:6px;color:#ddd">▾≡</div>
<div class="a" style="left:452px;top:69px;width:145px;height:67px;background:#d6d6d6"></div>
<div class="a" style="left:465px;top:84px;width:10px;height:10px;background:#000;border:1px solid #888"></div>
<div class="a" style="left:457px;top:76px;width:12px;height:12px;background:#fff;border:1px solid #555"></div>
<div class="t" style="left:478px;top:79px;font-size:7px;color:#222">K</div>
<div class="a" style="left:485px;top:80px;width:57px;height:4px;background:linear-gradient(90deg,#fff,#000)"></div>
<svg style="left:483px;top:83px" width="6" height="6"><path d="M3 0.5L5.5 5.5H0.5Z" fill="#eee" stroke="#333" stroke-width="0.8"/></svg>
<div class="a" style="left:546px;top:76px;width:21px;height:11px;background:#fff;border:1px solid #b8b8b8"></div>
<div class="t" style="left:549px;top:78px;font-size:7px;color:#111">0</div>
<div class="t" style="left:570px;top:79px;font-size:7px;color:#222">%</div>
<div class="a" style="left:457px;top:123px;width:115px;height:9px;background:linear-gradient(90deg,#400 0%,#e22 8%,#ee6 22%,#2b2 38%,#5ce 55%,#22d 68%,#106 78%,#b2b 88%,#d24 95%,#600 100%)"></div>
<div class="a" style="left:457px;top:127px;width:115px;height:5px;background:linear-gradient(rgba(0,0,0,0),rgba(0,0,0,.5))"></div>
<div class="a" style="left:568px;top:123px;width:4px;height:4px;background:#fff"></div>
<div class="a" style="left:568px;top:127px;width:4px;height:5px;background:#000"></div>
<div class="a" style="left:452px;top:136px;width:145px;height:1px;background:#3a3a3a"></div>
<!-- adjustments panel -->
<div class="a" style="left:452px;top:137px;width:145px;height:11px;background:#8b8b8b"></div>
<div class="a" style="left:474px;top:137px;width:21px;height:11px;background:#979797"></div>
<div class="a" style="left:453px;top:137px;width:21px;height:11px;background:#d6d6d6;border-top:1px solid #eee"></div>
<div class="t" style="left:457px;top:139px;font-size:7px;color:#444">调整</div>
<div class="t" style="left:478px;top:139px;font-size:7px;color:#c4c4c4">蒙版</div>
<div class="t" style="left:586px;top:139px;font-size:6px;color:#ddd">▾≡</div>
<div class="a" style="left:452px;top:148px;width:145px;height:198px;background:#d6d6d6"></div>
<div class="t" style="left:455px;top:153px;font-size:7.5px;color:#111">色相/饱和度:</div>
<div class="a" style="left:497px;top:151px;width:78px;height:12px;background:#fff;border:1px solid #aaa"></div>
<div class="t" style="left:502px;top:154px;font-size:7px;color:#222">自定</div>
<div class="a" style="left:565px;top:152px;width:9px;height:10px;background:linear-gradient(#dde8f6,#b4c8e6)"></div>
<svg style="left:567px;top:155px" width="6" height="4"><path d="M0.5 0.5L3 3L5.5 0.5" stroke="#2a4f9a" stroke-width="1.3" fill="none"/></svg>
<svg style="left:457px;top:173px" width="10" height="11"><path d="M1 1H4V10M6 1V4H9M6 7H9V10H6" stroke="#b0b0b0" stroke-width="1.2" fill="none"/></svg>
<div class="a" style="left:478px;top:174px;width:53px;height:10px;background:#dcdcdc;border:1px solid #c6c6c6"></div>
<div class="t" style="left:482px;top:176px;font-size:7px;color:#aaa">全图</div>
<div class="a" style="left:521px;top:175px;width:9px;height:8px;background:#d0d0d0;border-left:1px solid #c6c6c6"></div>
<div class="t" style="left:459px;top:194px;font-size:7.5px;color:#111">色相:</div>
<div class="a" style="left:546px;top:191px;width:23px;height:11px;background:#fff;border:1px solid #b8b8b8"></div>
<div class="t" style="left:549px;top:193px;font-size:7px;color:#111">254</div>
<div class="a" style="left:459px;top:204px;width:112px;height:3px;background:linear-gradient(90deg,#e22 0%,#ee2 17%,#2d2 33%,#2dd 50%,#22e 67%,#d2d 83%,#e22 100%)"></div>
<svg style="left:534px;top:208px" width="7" height="5"><path d="M3.5 0.5L6.5 4.5H0.5Z" fill="#f2f2f2" stroke="#555" stroke-width="0.7"/></svg>
<div class="t" style="left:459px;top:217px;font-size:7.5px;color:#111">饱和度:</div>
<div class="a" style="left:546px;top:214px;width:23px;height:11px;background:#fff;border:1px solid #b8b8b8"></div>
<div class="t" style="left:549px;top:216px;font-size:7px;color:#111">10</div>
<div class="a" style="left:459px;top:227px;width:112px;height:3px;background:linear-gradient(90deg,#888,#b44 60%,#c22)"></div>
<svg style="left:467px;top:231px" width="7" height="5"><path d="M3.5 0.5L6.5 4.5H0.5Z" fill="#f2f2f2" stroke="#444" stroke-width="0.8"/></svg>
<div class="t" style="left:459px;top:240px;font-size:7.5px;color:#111">明度:</div>
<div class="a" style="left:546px;top:237px;width:23px;height:11px;background:#fff;border:1px solid #b8b8b8"></div>
<div class="t" style="left:548px;top:239px;font-size:7px;color:#111">+26</div>
<div class="a" style="left:459px;top:250px;width:113px;height:3px;background:linear-gradient(90deg,#000,#fff)"></div>
<svg style="left:526px;top:254px" width="7" height="5"><path d="M3.5 0.5L6.5 4.5H0.5Z" fill="#f2f2f2" stroke="#444" stroke-width="0.8"/></svg>
<svg style="left:459px;top:290px" width="9" height="10"><path d="M0 10L5 4" stroke="#aaa" stroke-width="1.3"/><path d="M5 2L7 0L9 2L7 5Z" fill="#888"/></svg>
<svg style="left:475px;top:290px" width="9" height="10"><path d="M0 10L5 4" stroke="#aaa" stroke-width="1.3"/><path d="M5 2L7 0L9 2L7 5Z" fill="#888"/></svg>
<svg style="left:490px;top:290px" width="9" height="10"><path d="M0 10L5 4" stroke="#aaa" stroke-width="1.3"/><path d="M5 2L7 0L9 2L7 5Z" fill="#888"/></svg>
<div class="a" style="left:508px;top:293px;width:7px;height:7px;background:#fff;border:1px solid #555"></div>
<svg style="left:509px;top:294px" width="6" height="5"><path d="M0.5 2.5L2.5 4.5L5.5 0.5" stroke="#222" stroke-width="1" fill="none"/></svg>
<div class="t" style="left:517px;top:291px;font-size:7.5px;color:#111">着色</div>
<div class="a" style="left:458px;top:316px;width:114px;height:4px;background:linear-gradient(90deg,#2cd 0%,#23c 12%,#70c 25%,#d3c 38%,#d22 50%,#dd3 68%,#2c3 85%,#2dd 100%)"></div>
<div class="a" style="left:458px;top:320px;width:114px;height:5px;background:#fbfbfb"></div>
<div class="a" style="left:458px;top:325px;width:114px;height:2px;background:#a8a8a8"></div>
<div class="a" style="left:452px;top:334px;width:145px;height:1px;background:#eaeaea"></div>
<div class="a" style="left:452px;top:333px;width:145px;height:1px;background:#b4b4b4"></div>
<svg style="left:456px;top:336px" width="9" height="8"><ellipse cx="4.5" cy="4" rx="4" ry="3" fill="#999" stroke="#555" stroke-width="0.8"/></svg>
<svg style="left:472px;top:336px" width="10" height="8"><rect x="0.5" y="0.5" width="5" height="4" fill="none" stroke="#333"/><rect x="4.5" y="3.5" width="5" height="4" fill="#ddd" stroke="#333"/></svg>
<svg style="left:489px;top:335px" width="7" height="10"><rect x="0.5" y="0.5" width="6" height="9" rx="3" fill="#222"/><path d="M1 4H6" stroke="#ccc"/></svg>
<svg style="left:504px;top:337px" width="9" height="6"><ellipse cx="4.5" cy="3" rx="4" ry="2.5" fill="#333"/></svg>
<svg style="left:532px;top:336px" width="9" height="8"><path d="M4 1A3 3 0 1 0 4 7" stroke="#222" stroke-width="1.6" fill="none"/><path d="M5 2H8V5H5Z" fill="#222"/></svg>
<svg style="left:547px;top:336px" width="9" height="9"><path d="M5 1A3.5 3.5 0 1 1 2 3" stroke="#222" stroke-width="1.8" fill="none"/><path d="M0 1L4 0.5L3 4Z" fill="#222"/></svg>
<svg style="left:567px;top:336px" width="6" height="9"><path d="M1 1H5M1.5 2.5H4.5V8H1.5Z" stroke="#333" fill="none"/></svg>
<div class="a" style="left:452px;top:346px;width:145px;height:1px;background:#3a3a3a"></div>
<!-- layers tabs -->
<div class="a" style="left:452px;top:347px;width:145px;height:11px;background:#8b8b8b"></div>
<div class="a" style="left:474px;top:347px;width:45px;height:11px;background:#979797"></div>
<div class="a" style="left:453px;top:347px;width:21px;height:11px;background:#d6d6d6;border-top:1px solid #eee"></div>
<div class="t" style="left:457px;top:349px;font-size:7px;color:#444">图层</div>
<div class="t" style="left:478px;top:349px;font-size:7px;color:#c4c4c4">通道 | 路径</div>
<div class="t" style="left:586px;top:349px;font-size:6px;color:#ddd">▾≡</div>
<div class="a" style="left:452px;top:358px;width:145px;height:1px;background:#a4a4a4"></div>
<!-- green ball -->
<div class="a" style="left:589px;top:320px;width:28px;height:29px;z-index:5;border-radius:50%;background:radial-gradient(circle at 40% 40%,#7ed87e,#3cb44a 60%,#2a8a35);border:1px solid #b4dcb4"></div><div class="t" style="left:593px;top:331px;font-size:7px;color:#fff;font-weight:bold;z-index:6">Jo</div>
<div class="a" style="left:596px;top:0;width:4px;height:431px;background:#e2e2e2;border-left:1px solid #8a8a8a"></div>
</body></html>
